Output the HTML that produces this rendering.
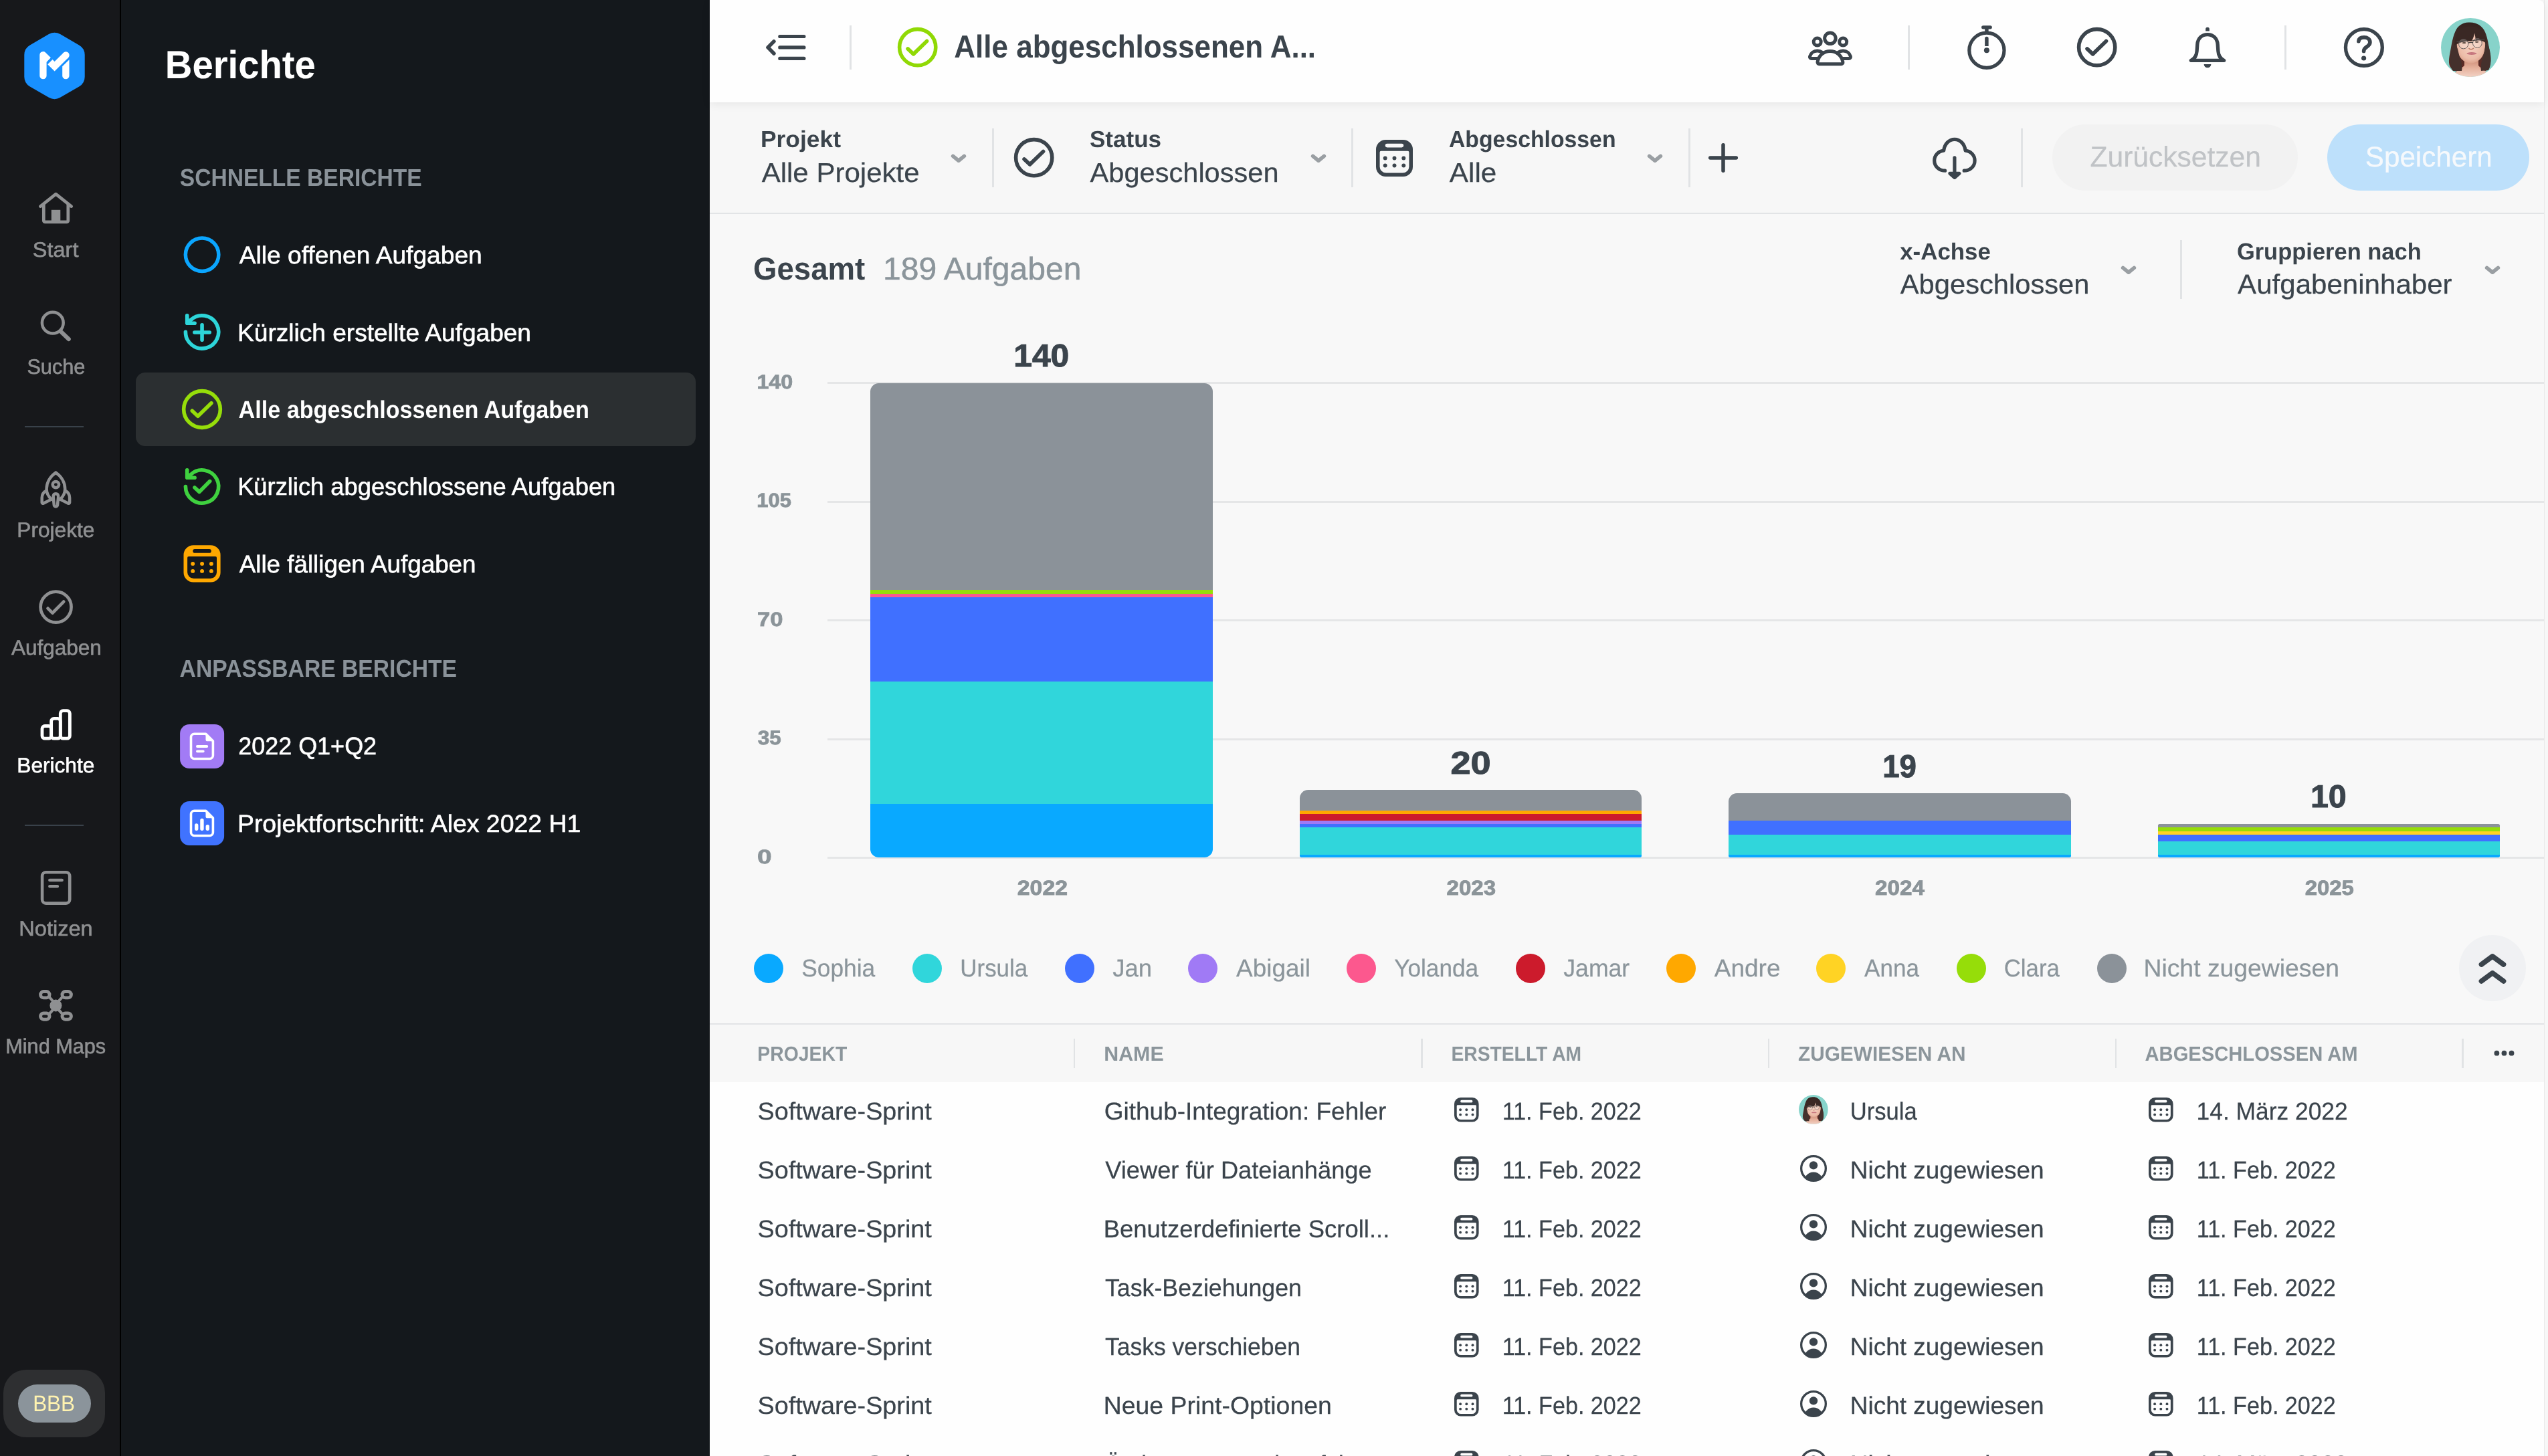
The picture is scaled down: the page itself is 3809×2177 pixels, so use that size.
<!DOCTYPE html>
<html lang="de">
<head>
<meta charset="utf-8">
<title>Berichte</title>
<style>
html,body{margin:0;padding:0}
body{width:3809px;height:2177px;overflow:hidden;position:relative;background:#f7f7f7;font-family:"Liberation Sans",sans-serif}
.t{position:absolute;white-space:nowrap;line-height:1;display:block;transform-origin:0 0;text-rendering:geometricPrecision}
#txt{position:absolute;left:0;top:0;width:3809px;height:2177px;will-change:transform}
div,svg,span{box-sizing:border-box}
</style>
</head>
<body>
<!-- navigation rail -->
<div style="position:absolute;left:0px;top:0px;width:179px;height:2177px;background:#17181b;"></div>
<div style="position:absolute;left:179px;top:0px;width:2px;height:2177px;background:#000;"></div>
<div style="position:absolute;left:181px;top:0px;width:880px;height:2177px;background:#14181c;"></div>
<!-- main area -->
<div style="position:absolute;left:1061px;top:0px;width:2742px;height:2177px;background:#f7f7f7;"></div>
<div style="position:absolute;left:3803px;top:0px;width:1px;height:2177px;background:#e9e9e9;"></div>
<div style="position:absolute;left:1061px;top:320px;width:2742px;height:1211px;background:#f8f8f8;"></div>
<div style="position:absolute;left:1061px;top:0px;width:2742px;height:152.5px;background:#fefefe;box-shadow:0 3px 14px rgba(0,0,0,0.07);border-top-right-radius:8px;"></div>
<div style="position:absolute;left:1061px;top:317.8px;width:2742px;height:2px;background:#e2e4e6;"></div>
<div style="position:absolute;left:1061px;top:1530px;width:2742px;height:2px;background:#e2e4e6;"></div>
<div style="position:absolute;left:1061px;top:1532px;width:2742px;height:86px;background:#f7f7f7;"></div>
<div style="position:absolute;left:1061px;top:1617.8px;width:2742px;height:560px;background:#fefefe;"></div>
<svg style="position:absolute;left:36px;top:48px;overflow:visible" width="92" height="101" viewBox="36 48 92 101" ><path d="M73.00,51.11 A17,17 0 0 1 90.00,51.11 L118.21,67.39 A17,17 0 0 1 126.71,82.11 L126.71,114.69 A17,17 0 0 1 118.21,129.41 L90.00,145.69 A17,17 0 0 1 73.00,145.69 L44.79,129.41 A17,17 0 0 1 36.29,114.69 L36.29,82.11 A17,17 0 0 1 44.79,67.39 Z" fill="#1890ff"/><path d="M59.3,82.2 a5.15,5.15 0 0 1 8.7,-3.7 L75.9,86.3 L69.6,92.8 L69.6,113.2 a5.15,5.15 0 0 1 -10.3,0 Z" fill="#fff"/><path d="M93.2,99.2 L103.5,89.3 L103.5,113.2 a5.15,5.15 0 0 1 -10.3,0 Z" fill="#fff"/><path d="M74.85,92.55 L81.6,99.25 L98.7,82.3" fill="none" stroke="#fff" stroke-width="10.3" stroke-linejoin="miter" stroke-linecap="butt"/><circle cx="98.5" cy="82.5" r="5.15" fill="#fff"/></svg>
<svg style="position:absolute;left:57px;top:286px;overflow:visible" width="54" height="50" viewBox="57 286 54 50" ><path d="M60.4,308.6 L83.5,290.1 L106.7,308.6" fill="none" stroke="#8f9092" stroke-width="4.7" stroke-linecap="round" stroke-linejoin="round"/><path d="M65.3,306.5 V329.8 a2,2 0 0 0 2,2 H99.8 a2,2 0 0 0 2,-2 V306.5" fill="none" stroke="#8f9092" stroke-width="4.7" stroke-linecap="round" stroke-linejoin="round"/><rect x="76.8" y="313.8" width="13.5" height="17" fill="#8f9092"/></svg>
<svg style="position:absolute;left:60px;top:463px;overflow:visible" width="48" height="49" viewBox="60 463 48 49" ><circle cx="78.8" cy="482.7" r="15.9" fill="none" stroke="#8f9092" stroke-width="4.5" stroke-linecap="round" stroke-linejoin="round"/><path d="M91,495.8 L102.7,507" fill="none" stroke="#8f9092" stroke-width="6.2" stroke-linecap="round" stroke-linejoin="round"/></svg>
<svg style="position:absolute;left:60px;top:703px;overflow:visible" width="47" height="57" viewBox="60 703 47 57" ><path d="M83.4,706.6 C74,713 69.6,722.5 69.6,731 C69.6,737.5 72.3,742.5 77,746.5 M83.4,706.6 C92.8,713 97.2,722.5 97.2,731 C97.2,737.5 94.5,742.5 89.8,746.5" fill="none" stroke="#8f9092" stroke-width="4.5" stroke-linecap="round" stroke-linejoin="round"/><circle cx="83.4" cy="724.6" r="4.7" fill="none" stroke="#8f9092" stroke-width="4.5" stroke-linecap="round" stroke-linejoin="round"/><path d="M69.4,733.5 C64.5,736 62.7,740 62.7,744.5 V751.2 a1.6,1.6 0 0 0 2.4,1.4 L77.5,746.3" fill="none" stroke="#8f9092" stroke-width="4.5" stroke-linecap="round" stroke-linejoin="round"/><path d="M97.4,733.5 C102.3,736 104.1,740 104.1,744.5 V751.2 a1.6,1.6 0 0 1 -2.4,1.4 L89.3,746.3" fill="none" stroke="#8f9092" stroke-width="4.5" stroke-linecap="round" stroke-linejoin="round"/><path d="M83.4,738.2 c3.2,0 4,2.6 3.7,5.5 l-1.1,11.2 a2.6,2.6 0 0 1 -5.2,0 l-1.1,-11.2 c-0.3,-2.9 0.5,-5.5 3.7,-5.5 Z" fill="none" stroke="#8f9092" stroke-width="4.5" stroke-linecap="round" stroke-linejoin="round"/></svg>
<svg style="position:absolute;left:55.8px;top:879.8px;overflow:visible" width="55.3" height="55.3" viewBox="55.8 879.8 55.3 55.3" ><circle cx="83.4" cy="907.4" r="22.95" fill="none" stroke="#8f9092" stroke-width="4.7" stroke-linecap="round" stroke-linejoin="round"/><path d="M71.3,909.4 L78.3,916.3 L95,899.4" fill="none" stroke="#8f9092" stroke-width="4.7" stroke-linecap="round" stroke-linejoin="round"/></svg>
<svg style="position:absolute;left:60px;top:1060px;overflow:visible" width="48" height="48" viewBox="60 1060 48 48" ><rect x="63" y="1085.5" width="13.65" height="18.7" rx="4" fill="none" stroke="#ffffff" stroke-width="4.8" stroke-linecap="round" stroke-linejoin="round"/><rect x="76.65" y="1074.3" width="13.65" height="29.9" rx="4" fill="none" stroke="#ffffff" stroke-width="4.8" stroke-linecap="round" stroke-linejoin="round"/><rect x="90.3" y="1062.7" width="14.05" height="41.5" rx="4" fill="none" stroke="#ffffff" stroke-width="4.8" stroke-linecap="round" stroke-linejoin="round"/></svg>
<svg style="position:absolute;left:60px;top:1301px;overflow:visible" width="48" height="53" viewBox="60 1301 48 53" ><rect x="63.1" y="1304.2" width="41.1" height="46.4" rx="5.5" fill="none" stroke="#8f9092" stroke-width="4.6" stroke-linecap="round" stroke-linejoin="round"/><path d="M74.4,1316 H92.6 M74.4,1325.3 H85.8" fill="none" stroke="#8f9092" stroke-width="4.6" stroke-linecap="round" stroke-linejoin="round"/></svg>
<svg style="position:absolute;left:57px;top:1479px;overflow:visible" width="53" height="49" viewBox="57 1479 53 49" ><circle cx="83.4" cy="1503.4" r="9" fill="#8f9092"/><rect x="60.55" y="1482.55" width="13.5" height="9.3" rx="4.65" fill="none" stroke="#8f9092" stroke-width="4.9" stroke-linecap="round" stroke-linejoin="round"/><rect x="92.95" y="1482.55" width="13.5" height="9.3" rx="4.65" fill="none" stroke="#8f9092" stroke-width="4.9" stroke-linecap="round" stroke-linejoin="round"/><rect x="60.55" y="1514.95" width="13.5" height="9.3" rx="4.65" fill="none" stroke="#8f9092" stroke-width="4.9" stroke-linecap="round" stroke-linejoin="round"/><rect x="92.95" y="1514.95" width="13.5" height="9.3" rx="4.65" fill="none" stroke="#8f9092" stroke-width="4.9" stroke-linecap="round" stroke-linejoin="round"/><path d="M74.5,1491.8 Q78,1495 80.5,1499.5 M92.3,1491.8 Q88.8,1495 86.3,1499.5 M74.5,1515 Q78,1511.8 80.5,1507.3 M92.3,1515 Q88.8,1511.8 86.3,1507.3" fill="none" stroke="#8f9092" stroke-width="4.2" stroke-linecap="round" stroke-linejoin="round"/></svg>
<div style="position:absolute;left:37px;top:636.7px;width:88px;height:2px;background:#39414a;"></div>
<div style="position:absolute;left:37px;top:1232.7px;width:88px;height:2px;background:#39414a;"></div>
<div style="position:absolute;left:5px;top:2048px;width:152px;height:101px;background:#2e2f31;border-radius:34px;"></div>
<div style="position:absolute;left:27px;top:2070px;width:108.5px;height:57px;background:#8b949b;border-radius:28.5px;"></div>
<div style="position:absolute;left:203px;top:557px;width:837px;height:110px;background:#2b2f31;border-radius:14px;"></div>
<svg style="position:absolute;left:274px;top:353px;overflow:visible" width="56" height="56" viewBox="274 353 56 56" ><circle cx="302.1" cy="380.8" r="24.75" fill="none" stroke="#0ba6ff" stroke-width="5.5" stroke-linecap="round" stroke-linejoin="round"/></svg>
<svg style="position:absolute;left:274px;top:468px;overflow:visible" width="56" height="57" viewBox="274 468 56 57" ><path d="M285.24,478.37 A24.65,24.65 0 1 1 277.40,496.40" fill="none" stroke="#2dd5d9" stroke-width="5.6" stroke-linecap="round" stroke-linejoin="round"/><path d="M279.70,471.80 V483.20 H291.10" fill="none" stroke="#2dd5d9" stroke-width="5.6" stroke-linecap="round" stroke-linejoin="round"/><path d="M279.70,473.70 L279.70,483.20 L289.20,483.20 Z" fill="#2dd5d9"/><path d="M290.85,497.00 H313.25 M302.05,485.80 V508.20" fill="none" stroke="#2dd5d9" stroke-width="5.6" stroke-linecap="round" stroke-linejoin="round"/></svg>
<svg style="position:absolute;left:268.9px;top:579.0px;overflow:visible" width="65.9" height="65.9" viewBox="268.9 579.0 65.9 65.9" ><circle cx="301.9" cy="612" r="27.35" fill="none" stroke="#96de0a" stroke-width="5.6" stroke-linecap="round" stroke-linejoin="round"/><path d="M287.2,614.2 L295.7,622.2 L315.8,602.8" fill="none" stroke="#96de0a" stroke-width="5.6" stroke-linecap="round" stroke-linejoin="round"/></svg>
<svg style="position:absolute;left:274px;top:699px;overflow:visible" width="56" height="57" viewBox="274 699 56 57" ><path d="M285.24,709.47 A24.65,24.65 0 1 1 277.40,727.50" fill="none" stroke="#3fd13f" stroke-width="5.6" stroke-linecap="round" stroke-linejoin="round"/><path d="M279.70,702.90 V714.30 H291.10" fill="none" stroke="#3fd13f" stroke-width="5.6" stroke-linecap="round" stroke-linejoin="round"/><path d="M279.70,704.80 L279.70,714.30 L289.20,714.30 Z" fill="#3fd13f"/><path d="M291,729 L297.9,735.4 L313.7,719.6" fill="none" stroke="#3fd13f" stroke-width="5.6" stroke-linecap="round" stroke-linejoin="round"/></svg>
<svg style="position:absolute;left:274px;top:814px;overflow:visible" width="56" height="57" viewBox="274 814 56 57" ><path d="M289.00,815.30 H315.10 A14.50,14.50 0 0 1 329.60,829.80 V855.90 A14.50,14.50 0 0 1 315.10,870.40 H289.00 A14.50,14.50 0 0 1 274.50,855.90 V829.80 A14.50,14.50 0 0 1 289.00,815.30 Z M291.10,821.10 H313.00 A2.80,2.80 0 0 1 313.00,826.70 H291.10 A2.80,2.80 0 0 1 291.10,821.10 Z M282.10,832.10 H322.00 A2.00,2.00 0 0 1 324.00,834.10 V855.50 A9.50,9.50 0 0 1 314.50,865.00 H289.60 A9.50,9.50 0 0 1 280.10,855.50 V834.10 A2.00,2.00 0 0 1 282.10,832.10 Z" fill="#ffa800" fill-rule="evenodd"/><circle cx="288.20" cy="842.90" r="2.95" fill="#ffa800"/><circle cx="288.20" cy="853.90" r="2.95" fill="#ffa800"/><circle cx="302.05" cy="842.90" r="2.95" fill="#ffa800"/><circle cx="302.05" cy="853.90" r="2.95" fill="#ffa800"/><circle cx="315.90" cy="842.90" r="2.95" fill="#ffa800"/><circle cx="315.90" cy="853.90" r="2.95" fill="#ffa800"/></svg>
<svg style="position:absolute;left:269px;top:1082px;overflow:visible" width="67" height="68" viewBox="269 1082 67 68" ><rect x="269.1" y="1082.9" width="66" height="66.2" rx="14" fill="#a27bf5"/><path d="M290.50,1097.30 H307.70 L318.40,1108.10 V1129.50 A5,5 0 0 1 313.40,1134.50 H290.50 A5,5 0 0 1 285.50,1129.50 V1102.30 A5,5 0 0 1 290.50,1097.30 Z" fill="none" stroke="#fff" stroke-width="3.6" stroke-linecap="round" stroke-linejoin="round"/><path d="M307.50,1097.10 L318.60,1108.30 H310.10 A2.6,2.6 0 0 1 307.50,1105.70 Z" fill="#fff"/><path d="M294.90,1116.00 H309.30 M294.90,1123.30 H303.80" fill="none" stroke="#fff" stroke-width="3.8" stroke-linecap="round" stroke-linejoin="round"/></svg>
<svg style="position:absolute;left:269px;top:1197px;overflow:visible" width="67" height="68" viewBox="269 1197 67 68" ><rect x="269.1" y="1197.9" width="66" height="66.2" rx="14" fill="#4073ff"/><path d="M290.50,1212.30 H307.70 L318.40,1223.10 V1244.50 A5,5 0 0 1 313.40,1249.50 H290.50 A5,5 0 0 1 285.50,1244.50 V1217.30 A5,5 0 0 1 290.50,1212.30 Z" fill="none" stroke="#fff" stroke-width="3.6" stroke-linecap="round" stroke-linejoin="round"/><path d="M307.50,1212.10 L318.60,1223.30 H310.10 A2.6,2.6 0 0 1 307.50,1220.70 Z" fill="#fff"/><path d="M293.70,1233.90 V1239.20 M301.95,1226.50 V1239.20 M310.30,1235.60 V1239.20" fill="none" stroke="#fff" stroke-width="5.4" stroke-linecap="round" stroke-linejoin="round"/></svg>
<svg style="position:absolute;left:1144px;top:51px;overflow:visible" width="62" height="40" viewBox="1144 51 62 40" ><path d="M1165.8,54.5 H1201.9 M1165.8,70.9 H1201.9 M1165.8,87.4 H1201.9" fill="none" stroke="#3b444c" stroke-width="5.2" stroke-linecap="round" stroke-linejoin="round"/><path d="M1156.9,61.9 L1148,70.9 L1156.9,80" fill="none" stroke="#3b444c" stroke-width="5.6" stroke-linecap="round" stroke-linejoin="round"/></svg>
<div style="position:absolute;left:1270px;top:38px;width:3px;height:65.5px;background:#e1e3e5;"></div>
<svg style="position:absolute;left:1339.3px;top:38.3px;overflow:visible" width="65.4" height="65.4" viewBox="1339.3 38.3 65.4 65.4" ><circle cx="1372" cy="71" r="27.1" fill="none" stroke="#90d905" stroke-width="5.6" stroke-linecap="round" stroke-linejoin="round"/><path d="M1357.35,73.19 L1365.82,81.17 L1385.85,61.83" fill="none" stroke="#90d905" stroke-width="5.6" stroke-linecap="round" stroke-linejoin="round"/></svg>
<svg style="position:absolute;left:2702px;top:46px;overflow:visible" width="68" height="54" viewBox="2702 46 68 54" ><circle cx="2735.9" cy="57.3" r="8.25" fill="none" stroke="#3b444c" stroke-width="5" stroke-linecap="round" stroke-linejoin="round"/><circle cx="2716.7" cy="62.6" r="5.5" fill="none" stroke="#3b444c" stroke-width="5" stroke-linecap="round" stroke-linejoin="round"/><circle cx="2755.2" cy="62.6" r="5.5" fill="none" stroke="#3b444c" stroke-width="5" stroke-linecap="round" stroke-linejoin="round"/><path d="M2719.6,95.8 H2752.3 a2.6,2.6 0 0 0 2.6,-3 C2753.2,83 2745.5,76.5 2735.9,76.5 C2726.3,76.5 2718.7,83 2717,92.8 a2.6,2.6 0 0 0 2.6,3 Z" fill="none" stroke="#3b444c" stroke-width="5" stroke-linecap="round" stroke-linejoin="round"/><path d="M2717,87.6 H2708 a2.6,2.6 0 0 1 -2.5,-3.3 C2707,79 2711.5,76 2716.7,76 C2719.5,76 2722,76.8 2724,78.2" fill="none" stroke="#3b444c" stroke-width="5" stroke-linecap="round" stroke-linejoin="round"/><path d="M2754.9,87.6 H2763.9 a2.6,2.6 0 0 0 2.5,-3.3 C2764.9,79 2760.4,76 2755.2,76 C2752.4,76 2749.9,76.8 2747.9,78.2" fill="none" stroke="#3b444c" stroke-width="5" stroke-linecap="round" stroke-linejoin="round"/></svg>
<div style="position:absolute;left:2851.6px;top:38px;width:3px;height:65.5px;background:#e1e3e5;"></div>
<svg style="position:absolute;left:2940px;top:37px;overflow:visible" width="60" height="68" viewBox="2940 37 60 68" ><circle cx="2969.9" cy="75.2" r="26.1" fill="none" stroke="#3b444c" stroke-width="5.2" stroke-linecap="round" stroke-linejoin="round"/><path d="M2964.7,40.8 H2975.2" fill="none" stroke="#3b444c" stroke-width="5.3" stroke-linecap="round" stroke-linejoin="round"/><path d="M2969.9,41 V49.5" fill="none" stroke="#3b444c" stroke-width="5.5" stroke-linecap="butt" stroke-linejoin="round"/><path d="M2967.15,68.9 V57.4 a2.75,2.75 0 0 1 5.5,0 V68.9 Z" fill="#3b444c"/><circle cx="2969.9" cy="75.2" r="4" fill="#3b444c"/></svg>
<svg style="position:absolute;left:3102.3px;top:38.3px;overflow:visible" width="65.4" height="65.4" viewBox="3102.3 38.3 65.4 65.4" ><circle cx="3135" cy="71" r="27.1" fill="none" stroke="#3b444c" stroke-width="5.6" stroke-linecap="round" stroke-linejoin="round"/><path d="M3120.35,73.19 L3128.82,81.17 L3148.85,61.83" fill="none" stroke="#3b444c" stroke-width="5.6" stroke-linecap="round" stroke-linejoin="round"/></svg>
<svg style="position:absolute;left:3271px;top:40px;overflow:visible" width="58" height="62" viewBox="3271 40 58 62" ><path d="M3297.15,46.4 V43.7 a2.85,2.85 0 0 1 5.7,0 V46.4 Z" fill="#3b444c"/><path d="M3275.3,90.3 H3324.7 C3318.5,87.5 3316.3,82.5 3315.9,76.5 L3315.2,66.5 C3314.6,57.5 3308.5,51.6 3300,51.6 C3291.5,51.6 3285.4,57.5 3284.8,66.5 L3284.1,76.5 C3283.7,82.5 3281.5,87.5 3275.3,90.3 Z" fill="none" stroke="#3b444c" stroke-width="5.3" stroke-linecap="round" stroke-linejoin="round"/><path d="M3294.6,95.9 H3305.4 a5.4,5.4 0 0 1 -10.8,0 Z" fill="#3b444c"/></svg>
<div style="position:absolute;left:3415px;top:38px;width:3px;height:65.5px;background:#e1e3e5;"></div>
<svg style="position:absolute;left:3503px;top:40px;overflow:visible" width="62" height="62" viewBox="3503 40 62 62" ><circle cx="3533.9" cy="71" r="27.45" fill="none" stroke="#3b444c" stroke-width="5.3" stroke-linecap="round" stroke-linejoin="round"/><path d="M3525.9,61.7 C3526.3,57.8 3529.6,55.9 3534,55.9 C3538.8,55.9 3542.9,58.5 3542.9,63.2 C3542.9,69.8 3533.6,70 3533.6,76.4" fill="none" stroke="#3b444c" stroke-width="5.7" stroke-linecap="round" stroke-linejoin="round"/><circle cx="3533.6" cy="87" r="3.6" fill="#3b444c"/></svg>
<svg style="position:absolute;left:3648.3px;top:26px;overflow:visible" width="90" height="90" viewBox="3648.3 26 90 90" ><defs><clipPath id="avc1"><circle cx="3693.3" cy="71" r="44"/></clipPath><radialGradient id="avf1" cx="0.5" cy="0.45" r="0.6"><stop offset="0" stop-color="#f6d3c4"/><stop offset="0.7" stop-color="#ecbca8"/><stop offset="1" stop-color="#d79a84"/></radialGradient><linearGradient id="avh1" x1="0" y1="0" x2="0" y2="1"><stop offset="0" stop-color="#34231f"/><stop offset="0.55" stop-color="#4a332f"/><stop offset="0.85" stop-color="#5a2a25"/><stop offset="1" stop-color="#7a2b24"/></linearGradient><linearGradient id="avn1" x1="0" y1="0" x2="0" y2="1"><stop offset="0" stop-color="#c98670"/><stop offset="0.5" stop-color="#e6b29d"/><stop offset="1" stop-color="#f4d6ca"/></linearGradient></defs><g clip-path="url(#avc1)"><rect x="3649.3" y="27" width="88" height="88" fill="#87d3ca"/><path d="M 3690.30 33.50 C 3701.30 32.50 3711.30 38.00 3715.30 48.00 C 3719.30 57.00 3720.80 69.00 3722.30 79.00 C 3724.30 89.00 3724.30 97.00 3719.30 104.00 C 3715.30 107.00 3709.30 107.50 3705.30 106.00 L 3679.30 106.00 C 3673.30 108.00 3667.30 106.00 3663.80 101.00 C 3659.80 95.00 3661.30 87.00 3662.80 79.00 C 3664.80 69.00 3666.30 57.00 3670.30 48.00 C 3674.30 38.00 3681.30 34.00 3690.30 33.50 Z" fill="url(#avh1)"/><path d="M 3684.30 87.00 L 3684.30 98.00 C 3679.30 103.00 3670.30 106.00 3663.30 117.00 L 3725.30 117.00 C 3718.30 106.00 3709.30 103.00 3705.30 98.00 L 3705.30 87.00 Z" fill="url(#avn1)"/><path d="M 3673.10 63.00 C 3672.80 73.00 3674.30 82.00 3680.30 88.50 C 3684.30 92.50 3689.30 94.50 3694.30 94.50 C 3699.30 94.50 3704.80 92.00 3708.80 87.50 C 3713.80 82.00 3715.80 73.00 3715.30 63.00 C 3715.30 55.00 3707.30 48.00 3694.30 48.00 C 3681.30 48.00 3673.30 55.00 3673.10 63.00 Z" fill="url(#avf1)"/><path d="M 3669.30 65.00 C 3673.30 67.00 3674.80 75.00 3676.30 82.00 C 3678.30 90.00 3682.30 96.00 3680.30 106.00 L 3667.30 106.00 C 3660.30 97.00 3662.30 79.00 3669.30 65.00 Z" fill="#44302c"/><path d="M 3718.30 63.00 C 3715.30 67.00 3714.80 75.00 3713.30 82.00 C 3711.30 90.00 3707.30 96.00 3709.30 106.00 L 3720.30 105.00 C 3726.30 95.00 3724.30 77.00 3718.30 63.00 Z" fill="#44302c"/><path d="M 3669.30 68.00 C 3670.30 54.00 3675.30 42.00 3690.30 39.50 C 3705.30 37.50 3716.30 49.00 3718.30 66.00 C 3715.30 63.00 3711.30 61.00 3707.30 60.50 C 3704.30 60.00 3702.30 60.30 3701.30 61.00 C 3700.90 57.00 3700.30 53.00 3699.60 49.50 C 3698.60 54.00 3697.10 58.00 3695.30 61.50 C 3687.30 61.00 3677.30 63.00 3669.30 68.00 Z" fill="#3a2824"/><circle cx="3683.00" cy="65.80" r="7.10" fill="rgba(255,255,255,0.22)" stroke="#6a615f" stroke-width="1.00"/><circle cx="3703.70" cy="64.40" r="6.90" fill="rgba(255,255,255,0.22)" stroke="#6a615f" stroke-width="1.00"/><path d="M 3673.30 62.20 L 3689.80 61.20 M 3696.80 60.60 L 3714.30 58.60 M 3689.90 64.20 Q 3693.30 62.80 3696.80 63.60" stroke="#4a4443" stroke-width="1.30" fill="none" stroke-linecap="round"/><ellipse cx="3683.90" cy="64.20" rx="2.90" ry="1.10" fill="#5c4a42"/><ellipse cx="3702.90" cy="62.80" rx="2.90" ry="1.10" fill="#5c4a42"/><path d="M 3691.30 72.60 Q 3694.30 75.00 3697.70 72.40" stroke="#bd7c66" stroke-width="1.60" fill="none" stroke-linecap="round"/><ellipse cx="3695.20" cy="80.00" rx="7.40" ry="1.90" fill="#c7787f"/></g></svg>
<svg style="position:absolute;left:1421.1px;top:230px;overflow:visible" width="24" height="14" viewBox="1421.1 230 24 14" ><path d="M1424.70,233.40 L1433.10,240.20 L1441.50,233.40" fill="none" stroke="#9a9fa3" stroke-width="5.6" stroke-linecap="round" stroke-linejoin="round"/></svg>
<div style="position:absolute;left:1483.2px;top:192px;width:3px;height:87.5px;background:#e1e3e5;"></div>
<svg style="position:absolute;left:1513.3px;top:203.3px;overflow:visible" width="65.4" height="65.4" viewBox="1513.3 203.3 65.4 65.4" ><circle cx="1546" cy="236" r="27.1" fill="none" stroke="#3b444c" stroke-width="5.6" stroke-linecap="round" stroke-linejoin="round"/><path d="M1531.35,238.19 L1539.82,246.17 L1559.85,226.83" fill="none" stroke="#3b444c" stroke-width="5.6" stroke-linecap="round" stroke-linejoin="round"/></svg>
<svg style="position:absolute;left:1959.2px;top:230px;overflow:visible" width="24" height="14" viewBox="1959.2 230 24 14" ><path d="M1962.80,233.40 L1971.20,240.20 L1979.60,233.40" fill="none" stroke="#9a9fa3" stroke-width="5.6" stroke-linecap="round" stroke-linejoin="round"/></svg>
<div style="position:absolute;left:2020.2px;top:192px;width:3px;height:87.5px;background:#e1e3e5;"></div>
<svg style="position:absolute;left:2055.5px;top:207.5px;overflow:visible" width="57" height="57" viewBox="2055.5 207.5 57 57" ><path d="M2070.97,208.50 H2097.03 A14.47,14.47 0 0 1 2111.50,222.97 V249.03 A14.47,14.47 0 0 1 2097.03,263.50 H2070.97 A14.47,14.47 0 0 1 2056.50,249.03 V222.97 A14.47,14.47 0 0 1 2070.97,208.50 Z M2073.07,214.29 H2094.93 A2.79,2.79 0 0 1 2094.93,219.88 H2073.07 A2.79,2.79 0 0 1 2073.07,214.29 Z M2064.09,225.27 H2103.91 A2.00,2.00 0 0 1 2105.91,227.27 V248.63 A9.48,9.48 0 0 1 2096.43,258.11 H2071.57 A9.48,9.48 0 0 1 2062.09,248.63 V227.27 A2.00,2.00 0 0 1 2064.09,225.27 Z" fill="#3b444c" fill-rule="evenodd"/><circle cx="2070.18" cy="236.05" r="2.94" fill="#3b444c"/><circle cx="2070.18" cy="247.03" r="2.94" fill="#3b444c"/><circle cx="2084.00" cy="236.05" r="2.94" fill="#3b444c"/><circle cx="2084.00" cy="247.03" r="2.94" fill="#3b444c"/><circle cx="2097.82" cy="236.05" r="2.94" fill="#3b444c"/><circle cx="2097.82" cy="247.03" r="2.94" fill="#3b444c"/></svg>
<svg style="position:absolute;left:2462.1px;top:230px;overflow:visible" width="24" height="14" viewBox="2462.1 230 24 14" ><path d="M2465.70,233.40 L2474.10,240.20 L2482.50,233.40" fill="none" stroke="#9a9fa3" stroke-width="5.6" stroke-linecap="round" stroke-linejoin="round"/></svg>
<div style="position:absolute;left:2523.8px;top:192px;width:3px;height:87.5px;background:#e1e3e5;"></div>
<svg style="position:absolute;left:2553px;top:213px;overflow:visible" width="46" height="46" viewBox="2553 213 46 46" ><path d="M2556.7,236 H2595.3 M2576,216.7 V255.3" fill="none" stroke="#3b444c" stroke-width="5.5" stroke-linecap="round" stroke-linejoin="round"/></svg>
<svg style="position:absolute;left:2888px;top:205px;overflow:visible" width="68" height="64" viewBox="2888 205 68 64" ><path d="M2907.6,255.2 C2898.6,255.2 2891.7,248.6 2891.7,240.2 C2891.7,232.2 2897.6,226 2905.7,225.1 C2906.8,215.6 2913.4,208.3 2921.9,208.3 C2930.4,208.3 2937,215.6 2938.1,225.1 C2946.2,226 2952.1,232.2 2952.1,240.2 C2952.1,248.6 2945.2,255.2 2936.2,255.2" fill="none" stroke="#3b444c" stroke-width="5.2" stroke-linecap="round" stroke-linejoin="round"/><path d="M2921.9,235.8 V262" fill="none" stroke="#3b444c" stroke-width="5.2" stroke-linecap="round" stroke-linejoin="round"/><path d="M2914.8,259.3 L2921.9,265.5 L2929,259.3 Z" fill="#3b444c" stroke="#3b444c" stroke-width="5" stroke-linecap="round" stroke-linejoin="round"/></svg>
<div style="position:absolute;left:3021px;top:192px;width:3px;height:87.5px;background:#e1e3e5;"></div>
<div style="position:absolute;left:3068px;top:186px;width:367px;height:99px;background:#f2f2f2;border-radius:49.5px;"></div>
<div style="position:absolute;left:3479px;top:186px;width:302.2px;height:99px;background:#bde0fb;border-radius:49.5px;"></div>
<svg style="position:absolute;left:3169.9px;top:396.6px;overflow:visible" width="24" height="14" viewBox="3169.9 396.6 24 14" ><path d="M3173.50,400.00 L3181.90,406.80 L3190.30,400.00" fill="none" stroke="#9a9fa3" stroke-width="5.6" stroke-linecap="round" stroke-linejoin="round"/></svg>
<div style="position:absolute;left:3259px;top:359px;width:3px;height:88px;background:#e1e3e5;"></div>
<svg style="position:absolute;left:3714px;top:396.6px;overflow:visible" width="24" height="14" viewBox="3714 396.6 24 14" ><path d="M3717.60,400.00 L3726.00,406.80 L3734.40,400.00" fill="none" stroke="#9a9fa3" stroke-width="5.6" stroke-linecap="round" stroke-linejoin="round"/></svg>
<div style="position:absolute;left:1237px;top:571.0px;width:2566px;height:3px;background:#e5e6e7;"></div>
<div style="position:absolute;left:1237px;top:748.5px;width:2566px;height:3px;background:#e5e6e7;"></div>
<div style="position:absolute;left:1237px;top:926.0px;width:2566px;height:3px;background:#e5e6e7;"></div>
<div style="position:absolute;left:1237px;top:1103.5px;width:2566px;height:3px;background:#e5e6e7;"></div>
<div style="position:absolute;left:1237px;top:1281.0px;width:2566px;height:3px;background:#e5e6e7;"></div>
<div style="position:absolute;left:1301.2px;top:572.50px;width:511.5px;height:710.00px"><div style="position:absolute;left:0;top:628.86px;width:511.5px;height:81.14px;background:#09a9ff;border-radius:0 0 12.5px 12.5px;"></div><div style="position:absolute;left:0;top:446.29px;width:511.5px;height:183.17px;background:#30d6db;"></div><div style="position:absolute;left:0;top:319.50px;width:511.5px;height:127.39px;background:#4070ff;"></div><div style="position:absolute;left:0;top:314.43px;width:511.5px;height:5.67px;background:#fc588e;"></div><div style="position:absolute;left:0;top:309.36px;width:511.5px;height:5.67px;background:#96dd09;"></div><div style="position:absolute;left:0;top:0.00px;width:511.5px;height:309.96px;background:#8b9299;border-radius:12.5px 12.5px 0 0;"></div></div>
<div style="position:absolute;left:1942.7px;top:1181.07px;width:511.5px;height:101.43px"><div style="position:absolute;left:0;top:96.36px;width:511.5px;height:5.07px;background:#09a9ff;border-radius:0 0 2.5px 2.5px;"></div><div style="position:absolute;left:0;top:55.79px;width:511.5px;height:41.17px;background:#30d6db;"></div><div style="position:absolute;left:0;top:50.71px;width:511.5px;height:5.67px;background:#4070ff;"></div><div style="position:absolute;left:0;top:45.64px;width:511.5px;height:5.67px;background:#a07af5;"></div><div style="position:absolute;left:0;top:35.50px;width:511.5px;height:10.74px;background:#cc1b2c;"></div><div style="position:absolute;left:0;top:30.43px;width:511.5px;height:5.67px;background:#ffa800;"></div><div style="position:absolute;left:0;top:0.00px;width:511.5px;height:31.03px;background:#8b9299;border-radius:12.5px 12.5px 0 0;"></div></div>
<div style="position:absolute;left:2584.2px;top:1186.14px;width:511.5px;height:96.36px"><div style="position:absolute;left:0;top:91.29px;width:511.5px;height:5.07px;background:#09a9ff;border-radius:0 0 2.5px 2.5px;"></div><div style="position:absolute;left:0;top:60.86px;width:511.5px;height:31.03px;background:#30d6db;"></div><div style="position:absolute;left:0;top:40.57px;width:511.5px;height:20.89px;background:#4070ff;"></div><div style="position:absolute;left:0;top:0.00px;width:511.5px;height:41.17px;background:#8b9299;border-radius:12.5px 12.5px 0 0;"></div></div>
<div style="position:absolute;left:3225.8px;top:1231.79px;width:511.5px;height:50.71px"><div style="position:absolute;left:0;top:45.64px;width:511.5px;height:5.07px;background:#09a9ff;border-radius:0 0 2.5px 2.5px;"></div><div style="position:absolute;left:0;top:25.36px;width:511.5px;height:20.89px;background:#30d6db;"></div><div style="position:absolute;left:0;top:15.21px;width:511.5px;height:10.74px;background:#4070ff;"></div><div style="position:absolute;left:0;top:10.14px;width:511.5px;height:5.67px;background:#ffd324;"></div><div style="position:absolute;left:0;top:5.07px;width:511.5px;height:5.67px;background:#96dd09;"></div><div style="position:absolute;left:0;top:0.00px;width:511.5px;height:5.67px;background:#8b9299;border-radius:2.5px 2.5px 0 0;"></div></div>
<div style="position:absolute;left:1127.2px;top:1425.9px;width:43.8px;height:43.8px;background:#09a9ff;border-radius:22px;"></div>
<div style="position:absolute;left:1364.2px;top:1425.9px;width:43.8px;height:43.8px;background:#30d6db;border-radius:22px;"></div>
<div style="position:absolute;left:1592px;top:1425.9px;width:43.8px;height:43.8px;background:#4070ff;border-radius:22px;"></div>
<div style="position:absolute;left:1776px;top:1425.9px;width:43.8px;height:43.8px;background:#a07af5;border-radius:22px;"></div>
<div style="position:absolute;left:2013.2px;top:1425.9px;width:43.8px;height:43.8px;background:#fc588e;border-radius:22px;"></div>
<div style="position:absolute;left:2266.1px;top:1425.9px;width:43.8px;height:43.8px;background:#cc1b2c;border-radius:22px;"></div>
<div style="position:absolute;left:2491.1px;top:1425.9px;width:43.8px;height:43.8px;background:#ffa800;border-radius:22px;"></div>
<div style="position:absolute;left:2715.1px;top:1425.9px;width:43.8px;height:43.8px;background:#ffd324;border-radius:22px;"></div>
<div style="position:absolute;left:2924.8px;top:1425.9px;width:43.8px;height:43.8px;background:#96dd09;border-radius:22px;"></div>
<div style="position:absolute;left:3135.1px;top:1425.9px;width:43.8px;height:43.8px;background:#8b9299;border-radius:22px;"></div>
<div style="position:absolute;left:3676px;top:1397.5px;width:99.5px;height:99.5px;background:#f0f1f3;border-radius:50px;"></div>
<svg style="position:absolute;left:3705px;top:1425px;overflow:visible" width="43" height="47" viewBox="3705 1425 43 47" ><path d="M3709.4,1442.1 L3726,1429.9 L3742.6,1442.1 M3709.4,1467 L3726,1454.8 L3742.6,1467" fill="none" stroke="#3b444c" stroke-width="7.6" stroke-linecap="round" stroke-linejoin="round"/></svg>
<div style="position:absolute;left:1605px;top:1553px;width:2.3px;height:44px;background:#e1e3e5;"></div>
<div style="position:absolute;left:2124.3px;top:1553px;width:2.3px;height:44px;background:#e1e3e5;"></div>
<div style="position:absolute;left:2643.2px;top:1553px;width:2.3px;height:44px;background:#e1e3e5;"></div>
<div style="position:absolute;left:3161.8px;top:1553px;width:2.3px;height:44px;background:#e1e3e5;"></div>
<div style="position:absolute;left:3680.4px;top:1553px;width:2.3px;height:44px;background:#e1e3e5;"></div>
<svg style="position:absolute;left:3728px;top:1570px;overflow:visible" width="31" height="10" viewBox="3728 1570 31 10" ><circle cx="3732.4" cy="1574.7" r="3.9" fill="#3b444c"/><circle cx="3743.45" cy="1574.7" r="3.9" fill="#3b444c"/><circle cx="3754.5" cy="1574.7" r="3.9" fill="#3b444c"/></svg>
<svg style="position:absolute;left:2172.7px;top:1639.5px;overflow:visible" width="38.6" height="38.6" viewBox="2172.7 1639.5 38.6 38.6" ><path d="M2183.33,1640.50 H2200.67 A9.63,9.63 0 0 1 2210.30,1650.13 V1667.47 A9.63,9.63 0 0 1 2200.67,1677.10 H2183.33 A9.63,9.63 0 0 1 2173.70,1667.47 V1650.13 A9.63,9.63 0 0 1 2183.33,1640.50 Z M2184.73,1644.35 H2199.27 A1.86,1.86 0 0 1 2199.27,1648.07 H2184.73 A1.86,1.86 0 0 1 2184.73,1644.35 Z M2178.75,1651.66 H2205.25 A1.33,1.33 0 0 1 2206.58,1652.99 V1667.20 A6.31,6.31 0 0 1 2200.27,1673.51 H2183.73 A6.31,6.31 0 0 1 2177.42,1667.20 V1652.99 A1.33,1.33 0 0 1 2178.75,1651.66 Z" fill="#3b444c" fill-rule="evenodd"/><circle cx="2182.80" cy="1658.83" r="1.96" fill="#3b444c"/><circle cx="2182.80" cy="1666.14" r="1.96" fill="#3b444c"/><circle cx="2192.00" cy="1658.83" r="1.96" fill="#3b444c"/><circle cx="2192.00" cy="1666.14" r="1.96" fill="#3b444c"/><circle cx="2201.20" cy="1658.83" r="1.96" fill="#3b444c"/><circle cx="2201.20" cy="1666.14" r="1.96" fill="#3b444c"/></svg>
<svg style="position:absolute;left:2688.2px;top:1636.1px;overflow:visible" width="45.8" height="45.8" viewBox="2688.2 1636.1 45.8 45.8" ><defs><clipPath id="avc2"><circle cx="2711.1" cy="1659.0" r="21.9"/></clipPath><radialGradient id="avf2" cx="0.5" cy="0.45" r="0.6"><stop offset="0" stop-color="#f6d3c4"/><stop offset="0.7" stop-color="#ecbca8"/><stop offset="1" stop-color="#d79a84"/></radialGradient><linearGradient id="avh2" x1="0" y1="0" x2="0" y2="1"><stop offset="0" stop-color="#34231f"/><stop offset="0.55" stop-color="#4a332f"/><stop offset="0.85" stop-color="#5a2a25"/><stop offset="1" stop-color="#7a2b24"/></linearGradient><linearGradient id="avn2" x1="0" y1="0" x2="0" y2="1"><stop offset="0" stop-color="#c98670"/><stop offset="0.5" stop-color="#e6b29d"/><stop offset="1" stop-color="#f4d6ca"/></linearGradient></defs><g clip-path="url(#avc2)"><rect x="2689.2" y="1637.1" width="43.8" height="43.8" fill="#87d3ca"/><path d="M 2709.61 1640.34 C 2715.08 1639.84 2720.06 1642.57 2722.05 1647.55 C 2724.04 1652.03 2724.79 1658.00 2725.53 1662.98 C 2726.53 1667.96 2726.53 1671.94 2724.04 1675.42 C 2722.05 1676.92 2719.06 1677.17 2717.07 1676.42 L 2704.13 1676.42 C 2701.15 1677.42 2698.16 1676.42 2696.42 1673.93 C 2694.43 1670.95 2695.17 1666.96 2695.92 1662.98 C 2696.91 1658.00 2697.66 1652.03 2699.65 1647.55 C 2701.64 1642.57 2705.13 1640.58 2709.61 1640.34 Z" fill="url(#avh2)"/><path d="M 2706.62 1666.96 L 2706.62 1672.44 C 2704.13 1674.93 2699.65 1676.42 2696.17 1681.90 L 2727.03 1681.90 C 2723.54 1676.42 2719.06 1674.93 2717.07 1672.44 L 2717.07 1666.96 Z" fill="url(#avn2)"/><path d="M 2701.05 1655.02 C 2700.90 1660.00 2701.64 1664.47 2704.63 1667.71 C 2706.62 1669.70 2709.11 1670.70 2711.60 1670.70 C 2714.09 1670.70 2716.82 1669.45 2718.81 1667.21 C 2721.30 1664.47 2722.30 1660.00 2722.05 1655.02 C 2722.05 1651.04 2718.07 1647.55 2711.60 1647.55 C 2705.13 1647.55 2701.15 1651.04 2701.05 1655.02 Z" fill="url(#avf2)"/><path d="M 2699.15 1656.01 C 2701.15 1657.01 2701.89 1660.99 2702.64 1664.47 C 2703.63 1668.46 2705.62 1671.44 2704.63 1676.42 L 2698.16 1676.42 C 2694.67 1671.94 2695.67 1662.98 2699.15 1656.01 Z" fill="#44302c"/><path d="M 2723.54 1655.02 C 2722.05 1657.01 2721.80 1660.99 2721.05 1664.47 C 2720.06 1668.46 2718.07 1671.44 2719.06 1676.42 L 2724.54 1675.92 C 2727.52 1670.95 2726.53 1661.99 2723.54 1655.02 Z" fill="#44302c"/><path d="M 2699.15 1657.51 C 2699.65 1650.54 2702.14 1644.57 2709.61 1643.32 C 2717.07 1642.33 2722.55 1648.05 2723.54 1656.51 C 2722.05 1655.02 2720.06 1654.02 2718.07 1653.77 C 2716.57 1653.52 2715.58 1653.67 2715.08 1654.02 C 2714.88 1652.03 2714.58 1650.04 2714.24 1648.30 C 2713.74 1650.54 2712.99 1652.53 2712.10 1654.27 C 2708.11 1654.02 2703.14 1655.02 2699.15 1657.51 Z" fill="#3a2824"/><circle cx="2705.97" cy="1656.41" r="3.53" fill="rgba(255,255,255,0.22)" stroke="#6a615f" stroke-width="0.50"/><circle cx="2716.28" cy="1655.71" r="3.43" fill="rgba(255,255,255,0.22)" stroke="#6a615f" stroke-width="0.50"/><path d="M 2701.15 1654.62 L 2709.36 1654.12 M 2712.84 1653.82 L 2721.55 1652.83 M 2709.41 1655.62 Q 2711.10 1654.92 2712.84 1655.32" stroke="#4a4443" stroke-width="0.65" fill="none" stroke-linecap="round"/><ellipse cx="2706.42" cy="1655.62" rx="1.44" ry="0.55" fill="#5c4a42"/><ellipse cx="2715.88" cy="1654.92" rx="1.44" ry="0.55" fill="#5c4a42"/><path d="M 2710.10 1659.80 Q 2711.60 1660.99 2713.29 1659.70" stroke="#bd7c66" stroke-width="0.80" fill="none" stroke-linecap="round"/><ellipse cx="2712.05" cy="1663.48" rx="3.68" ry="0.95" fill="#c7787f"/></g></svg>
<svg style="position:absolute;left:3210.7px;top:1639.5px;overflow:visible" width="38.6" height="38.6" viewBox="3210.7 1639.5 38.6 38.6" ><path d="M3221.33,1640.50 H3238.67 A9.63,9.63 0 0 1 3248.30,1650.13 V1667.47 A9.63,9.63 0 0 1 3238.67,1677.10 H3221.33 A9.63,9.63 0 0 1 3211.70,1667.47 V1650.13 A9.63,9.63 0 0 1 3221.33,1640.50 Z M3222.73,1644.35 H3237.27 A1.86,1.86 0 0 1 3237.27,1648.07 H3222.73 A1.86,1.86 0 0 1 3222.73,1644.35 Z M3216.75,1651.66 H3243.25 A1.33,1.33 0 0 1 3244.58,1652.99 V1667.20 A6.31,6.31 0 0 1 3238.27,1673.51 H3221.73 A6.31,6.31 0 0 1 3215.42,1667.20 V1652.99 A1.33,1.33 0 0 1 3216.75,1651.66 Z" fill="#3b444c" fill-rule="evenodd"/><circle cx="3220.80" cy="1658.83" r="1.96" fill="#3b444c"/><circle cx="3220.80" cy="1666.14" r="1.96" fill="#3b444c"/><circle cx="3230.00" cy="1658.83" r="1.96" fill="#3b444c"/><circle cx="3230.00" cy="1666.14" r="1.96" fill="#3b444c"/><circle cx="3239.20" cy="1658.83" r="1.96" fill="#3b444c"/><circle cx="3239.20" cy="1666.14" r="1.96" fill="#3b444c"/></svg>
<svg style="position:absolute;left:2172.7px;top:1727.5px;overflow:visible" width="38.6" height="38.6" viewBox="2172.7 1727.5 38.6 38.6" ><path d="M2183.33,1728.50 H2200.67 A9.63,9.63 0 0 1 2210.30,1738.13 V1755.47 A9.63,9.63 0 0 1 2200.67,1765.10 H2183.33 A9.63,9.63 0 0 1 2173.70,1755.47 V1738.13 A9.63,9.63 0 0 1 2183.33,1728.50 Z M2184.73,1732.35 H2199.27 A1.86,1.86 0 0 1 2199.27,1736.07 H2184.73 A1.86,1.86 0 0 1 2184.73,1732.35 Z M2178.75,1739.66 H2205.25 A1.33,1.33 0 0 1 2206.58,1740.99 V1755.20 A6.31,6.31 0 0 1 2200.27,1761.51 H2183.73 A6.31,6.31 0 0 1 2177.42,1755.20 V1740.99 A1.33,1.33 0 0 1 2178.75,1739.66 Z" fill="#3b444c" fill-rule="evenodd"/><circle cx="2182.80" cy="1746.83" r="1.96" fill="#3b444c"/><circle cx="2182.80" cy="1754.14" r="1.96" fill="#3b444c"/><circle cx="2192.00" cy="1746.83" r="1.96" fill="#3b444c"/><circle cx="2192.00" cy="1754.14" r="1.96" fill="#3b444c"/><circle cx="2201.20" cy="1746.83" r="1.96" fill="#3b444c"/><circle cx="2201.20" cy="1754.14" r="1.96" fill="#3b444c"/></svg>
<svg style="position:absolute;left:2690.1px;top:1725.8px;overflow:visible" width="42" height="42" viewBox="2690.1 1725.8 42 42" ><defs><clipPath id="pc1"><circle cx="2711.1" cy="1746.8" r="18.3"/></clipPath></defs><circle cx="2711.1" cy="1746.8" r="18.35" fill="none" stroke="#3b444c" stroke-width="3.3" stroke-linecap="round" stroke-linejoin="round"/><circle cx="2711.1" cy="1742.20" r="6.2" fill="#3b444c"/><ellipse cx="2711.1" cy="1770.30" rx="15.5" ry="18" fill="#3b444c" clip-path="url(#pc1)"/></svg>
<svg style="position:absolute;left:3210.7px;top:1727.5px;overflow:visible" width="38.6" height="38.6" viewBox="3210.7 1727.5 38.6 38.6" ><path d="M3221.33,1728.50 H3238.67 A9.63,9.63 0 0 1 3248.30,1738.13 V1755.47 A9.63,9.63 0 0 1 3238.67,1765.10 H3221.33 A9.63,9.63 0 0 1 3211.70,1755.47 V1738.13 A9.63,9.63 0 0 1 3221.33,1728.50 Z M3222.73,1732.35 H3237.27 A1.86,1.86 0 0 1 3237.27,1736.07 H3222.73 A1.86,1.86 0 0 1 3222.73,1732.35 Z M3216.75,1739.66 H3243.25 A1.33,1.33 0 0 1 3244.58,1740.99 V1755.20 A6.31,6.31 0 0 1 3238.27,1761.51 H3221.73 A6.31,6.31 0 0 1 3215.42,1755.20 V1740.99 A1.33,1.33 0 0 1 3216.75,1739.66 Z" fill="#3b444c" fill-rule="evenodd"/><circle cx="3220.80" cy="1746.83" r="1.96" fill="#3b444c"/><circle cx="3220.80" cy="1754.14" r="1.96" fill="#3b444c"/><circle cx="3230.00" cy="1746.83" r="1.96" fill="#3b444c"/><circle cx="3230.00" cy="1754.14" r="1.96" fill="#3b444c"/><circle cx="3239.20" cy="1746.83" r="1.96" fill="#3b444c"/><circle cx="3239.20" cy="1754.14" r="1.96" fill="#3b444c"/></svg>
<svg style="position:absolute;left:2172.7px;top:1815.5px;overflow:visible" width="38.6" height="38.6" viewBox="2172.7 1815.5 38.6 38.6" ><path d="M2183.33,1816.50 H2200.67 A9.63,9.63 0 0 1 2210.30,1826.13 V1843.47 A9.63,9.63 0 0 1 2200.67,1853.10 H2183.33 A9.63,9.63 0 0 1 2173.70,1843.47 V1826.13 A9.63,9.63 0 0 1 2183.33,1816.50 Z M2184.73,1820.35 H2199.27 A1.86,1.86 0 0 1 2199.27,1824.07 H2184.73 A1.86,1.86 0 0 1 2184.73,1820.35 Z M2178.75,1827.66 H2205.25 A1.33,1.33 0 0 1 2206.58,1828.99 V1843.20 A6.31,6.31 0 0 1 2200.27,1849.51 H2183.73 A6.31,6.31 0 0 1 2177.42,1843.20 V1828.99 A1.33,1.33 0 0 1 2178.75,1827.66 Z" fill="#3b444c" fill-rule="evenodd"/><circle cx="2182.80" cy="1834.83" r="1.96" fill="#3b444c"/><circle cx="2182.80" cy="1842.14" r="1.96" fill="#3b444c"/><circle cx="2192.00" cy="1834.83" r="1.96" fill="#3b444c"/><circle cx="2192.00" cy="1842.14" r="1.96" fill="#3b444c"/><circle cx="2201.20" cy="1834.83" r="1.96" fill="#3b444c"/><circle cx="2201.20" cy="1842.14" r="1.96" fill="#3b444c"/></svg>
<svg style="position:absolute;left:2690.1px;top:1813.8px;overflow:visible" width="42" height="42" viewBox="2690.1 1813.8 42 42" ><defs><clipPath id="pc2"><circle cx="2711.1" cy="1834.8" r="18.3"/></clipPath></defs><circle cx="2711.1" cy="1834.8" r="18.35" fill="none" stroke="#3b444c" stroke-width="3.3" stroke-linecap="round" stroke-linejoin="round"/><circle cx="2711.1" cy="1830.20" r="6.2" fill="#3b444c"/><ellipse cx="2711.1" cy="1858.30" rx="15.5" ry="18" fill="#3b444c" clip-path="url(#pc2)"/></svg>
<svg style="position:absolute;left:3210.7px;top:1815.5px;overflow:visible" width="38.6" height="38.6" viewBox="3210.7 1815.5 38.6 38.6" ><path d="M3221.33,1816.50 H3238.67 A9.63,9.63 0 0 1 3248.30,1826.13 V1843.47 A9.63,9.63 0 0 1 3238.67,1853.10 H3221.33 A9.63,9.63 0 0 1 3211.70,1843.47 V1826.13 A9.63,9.63 0 0 1 3221.33,1816.50 Z M3222.73,1820.35 H3237.27 A1.86,1.86 0 0 1 3237.27,1824.07 H3222.73 A1.86,1.86 0 0 1 3222.73,1820.35 Z M3216.75,1827.66 H3243.25 A1.33,1.33 0 0 1 3244.58,1828.99 V1843.20 A6.31,6.31 0 0 1 3238.27,1849.51 H3221.73 A6.31,6.31 0 0 1 3215.42,1843.20 V1828.99 A1.33,1.33 0 0 1 3216.75,1827.66 Z" fill="#3b444c" fill-rule="evenodd"/><circle cx="3220.80" cy="1834.83" r="1.96" fill="#3b444c"/><circle cx="3220.80" cy="1842.14" r="1.96" fill="#3b444c"/><circle cx="3230.00" cy="1834.83" r="1.96" fill="#3b444c"/><circle cx="3230.00" cy="1842.14" r="1.96" fill="#3b444c"/><circle cx="3239.20" cy="1834.83" r="1.96" fill="#3b444c"/><circle cx="3239.20" cy="1842.14" r="1.96" fill="#3b444c"/></svg>
<svg style="position:absolute;left:2172.7px;top:1903.5px;overflow:visible" width="38.6" height="38.6" viewBox="2172.7 1903.5 38.6 38.6" ><path d="M2183.33,1904.50 H2200.67 A9.63,9.63 0 0 1 2210.30,1914.13 V1931.47 A9.63,9.63 0 0 1 2200.67,1941.10 H2183.33 A9.63,9.63 0 0 1 2173.70,1931.47 V1914.13 A9.63,9.63 0 0 1 2183.33,1904.50 Z M2184.73,1908.35 H2199.27 A1.86,1.86 0 0 1 2199.27,1912.07 H2184.73 A1.86,1.86 0 0 1 2184.73,1908.35 Z M2178.75,1915.66 H2205.25 A1.33,1.33 0 0 1 2206.58,1916.99 V1931.20 A6.31,6.31 0 0 1 2200.27,1937.51 H2183.73 A6.31,6.31 0 0 1 2177.42,1931.20 V1916.99 A1.33,1.33 0 0 1 2178.75,1915.66 Z" fill="#3b444c" fill-rule="evenodd"/><circle cx="2182.80" cy="1922.83" r="1.96" fill="#3b444c"/><circle cx="2182.80" cy="1930.14" r="1.96" fill="#3b444c"/><circle cx="2192.00" cy="1922.83" r="1.96" fill="#3b444c"/><circle cx="2192.00" cy="1930.14" r="1.96" fill="#3b444c"/><circle cx="2201.20" cy="1922.83" r="1.96" fill="#3b444c"/><circle cx="2201.20" cy="1930.14" r="1.96" fill="#3b444c"/></svg>
<svg style="position:absolute;left:2690.1px;top:1901.8px;overflow:visible" width="42" height="42" viewBox="2690.1 1901.8 42 42" ><defs><clipPath id="pc3"><circle cx="2711.1" cy="1922.8" r="18.3"/></clipPath></defs><circle cx="2711.1" cy="1922.8" r="18.35" fill="none" stroke="#3b444c" stroke-width="3.3" stroke-linecap="round" stroke-linejoin="round"/><circle cx="2711.1" cy="1918.20" r="6.2" fill="#3b444c"/><ellipse cx="2711.1" cy="1946.30" rx="15.5" ry="18" fill="#3b444c" clip-path="url(#pc3)"/></svg>
<svg style="position:absolute;left:3210.7px;top:1903.5px;overflow:visible" width="38.6" height="38.6" viewBox="3210.7 1903.5 38.6 38.6" ><path d="M3221.33,1904.50 H3238.67 A9.63,9.63 0 0 1 3248.30,1914.13 V1931.47 A9.63,9.63 0 0 1 3238.67,1941.10 H3221.33 A9.63,9.63 0 0 1 3211.70,1931.47 V1914.13 A9.63,9.63 0 0 1 3221.33,1904.50 Z M3222.73,1908.35 H3237.27 A1.86,1.86 0 0 1 3237.27,1912.07 H3222.73 A1.86,1.86 0 0 1 3222.73,1908.35 Z M3216.75,1915.66 H3243.25 A1.33,1.33 0 0 1 3244.58,1916.99 V1931.20 A6.31,6.31 0 0 1 3238.27,1937.51 H3221.73 A6.31,6.31 0 0 1 3215.42,1931.20 V1916.99 A1.33,1.33 0 0 1 3216.75,1915.66 Z" fill="#3b444c" fill-rule="evenodd"/><circle cx="3220.80" cy="1922.83" r="1.96" fill="#3b444c"/><circle cx="3220.80" cy="1930.14" r="1.96" fill="#3b444c"/><circle cx="3230.00" cy="1922.83" r="1.96" fill="#3b444c"/><circle cx="3230.00" cy="1930.14" r="1.96" fill="#3b444c"/><circle cx="3239.20" cy="1922.83" r="1.96" fill="#3b444c"/><circle cx="3239.20" cy="1930.14" r="1.96" fill="#3b444c"/></svg>
<svg style="position:absolute;left:2172.7px;top:1991.5px;overflow:visible" width="38.6" height="38.6" viewBox="2172.7 1991.5 38.6 38.6" ><path d="M2183.33,1992.50 H2200.67 A9.63,9.63 0 0 1 2210.30,2002.13 V2019.47 A9.63,9.63 0 0 1 2200.67,2029.10 H2183.33 A9.63,9.63 0 0 1 2173.70,2019.47 V2002.13 A9.63,9.63 0 0 1 2183.33,1992.50 Z M2184.73,1996.35 H2199.27 A1.86,1.86 0 0 1 2199.27,2000.07 H2184.73 A1.86,1.86 0 0 1 2184.73,1996.35 Z M2178.75,2003.66 H2205.25 A1.33,1.33 0 0 1 2206.58,2004.99 V2019.20 A6.31,6.31 0 0 1 2200.27,2025.51 H2183.73 A6.31,6.31 0 0 1 2177.42,2019.20 V2004.99 A1.33,1.33 0 0 1 2178.75,2003.66 Z" fill="#3b444c" fill-rule="evenodd"/><circle cx="2182.80" cy="2010.83" r="1.96" fill="#3b444c"/><circle cx="2182.80" cy="2018.14" r="1.96" fill="#3b444c"/><circle cx="2192.00" cy="2010.83" r="1.96" fill="#3b444c"/><circle cx="2192.00" cy="2018.14" r="1.96" fill="#3b444c"/><circle cx="2201.20" cy="2010.83" r="1.96" fill="#3b444c"/><circle cx="2201.20" cy="2018.14" r="1.96" fill="#3b444c"/></svg>
<svg style="position:absolute;left:2690.1px;top:1989.8px;overflow:visible" width="42" height="42" viewBox="2690.1 1989.8 42 42" ><defs><clipPath id="pc4"><circle cx="2711.1" cy="2010.8" r="18.3"/></clipPath></defs><circle cx="2711.1" cy="2010.8" r="18.35" fill="none" stroke="#3b444c" stroke-width="3.3" stroke-linecap="round" stroke-linejoin="round"/><circle cx="2711.1" cy="2006.20" r="6.2" fill="#3b444c"/><ellipse cx="2711.1" cy="2034.30" rx="15.5" ry="18" fill="#3b444c" clip-path="url(#pc4)"/></svg>
<svg style="position:absolute;left:3210.7px;top:1991.5px;overflow:visible" width="38.6" height="38.6" viewBox="3210.7 1991.5 38.6 38.6" ><path d="M3221.33,1992.50 H3238.67 A9.63,9.63 0 0 1 3248.30,2002.13 V2019.47 A9.63,9.63 0 0 1 3238.67,2029.10 H3221.33 A9.63,9.63 0 0 1 3211.70,2019.47 V2002.13 A9.63,9.63 0 0 1 3221.33,1992.50 Z M3222.73,1996.35 H3237.27 A1.86,1.86 0 0 1 3237.27,2000.07 H3222.73 A1.86,1.86 0 0 1 3222.73,1996.35 Z M3216.75,2003.66 H3243.25 A1.33,1.33 0 0 1 3244.58,2004.99 V2019.20 A6.31,6.31 0 0 1 3238.27,2025.51 H3221.73 A6.31,6.31 0 0 1 3215.42,2019.20 V2004.99 A1.33,1.33 0 0 1 3216.75,2003.66 Z" fill="#3b444c" fill-rule="evenodd"/><circle cx="3220.80" cy="2010.83" r="1.96" fill="#3b444c"/><circle cx="3220.80" cy="2018.14" r="1.96" fill="#3b444c"/><circle cx="3230.00" cy="2010.83" r="1.96" fill="#3b444c"/><circle cx="3230.00" cy="2018.14" r="1.96" fill="#3b444c"/><circle cx="3239.20" cy="2010.83" r="1.96" fill="#3b444c"/><circle cx="3239.20" cy="2018.14" r="1.96" fill="#3b444c"/></svg>
<svg style="position:absolute;left:2172.7px;top:2079.5px;overflow:visible" width="38.6" height="38.6" viewBox="2172.7 2079.5 38.6 38.6" ><path d="M2183.33,2080.50 H2200.67 A9.63,9.63 0 0 1 2210.30,2090.13 V2107.47 A9.63,9.63 0 0 1 2200.67,2117.10 H2183.33 A9.63,9.63 0 0 1 2173.70,2107.47 V2090.13 A9.63,9.63 0 0 1 2183.33,2080.50 Z M2184.73,2084.35 H2199.27 A1.86,1.86 0 0 1 2199.27,2088.07 H2184.73 A1.86,1.86 0 0 1 2184.73,2084.35 Z M2178.75,2091.66 H2205.25 A1.33,1.33 0 0 1 2206.58,2092.99 V2107.20 A6.31,6.31 0 0 1 2200.27,2113.51 H2183.73 A6.31,6.31 0 0 1 2177.42,2107.20 V2092.99 A1.33,1.33 0 0 1 2178.75,2091.66 Z" fill="#3b444c" fill-rule="evenodd"/><circle cx="2182.80" cy="2098.83" r="1.96" fill="#3b444c"/><circle cx="2182.80" cy="2106.14" r="1.96" fill="#3b444c"/><circle cx="2192.00" cy="2098.83" r="1.96" fill="#3b444c"/><circle cx="2192.00" cy="2106.14" r="1.96" fill="#3b444c"/><circle cx="2201.20" cy="2098.83" r="1.96" fill="#3b444c"/><circle cx="2201.20" cy="2106.14" r="1.96" fill="#3b444c"/></svg>
<svg style="position:absolute;left:2690.1px;top:2077.8px;overflow:visible" width="42" height="42" viewBox="2690.1 2077.8 42 42" ><defs><clipPath id="pc5"><circle cx="2711.1" cy="2098.8" r="18.3"/></clipPath></defs><circle cx="2711.1" cy="2098.8" r="18.35" fill="none" stroke="#3b444c" stroke-width="3.3" stroke-linecap="round" stroke-linejoin="round"/><circle cx="2711.1" cy="2094.20" r="6.2" fill="#3b444c"/><ellipse cx="2711.1" cy="2122.30" rx="15.5" ry="18" fill="#3b444c" clip-path="url(#pc5)"/></svg>
<svg style="position:absolute;left:3210.7px;top:2079.5px;overflow:visible" width="38.6" height="38.6" viewBox="3210.7 2079.5 38.6 38.6" ><path d="M3221.33,2080.50 H3238.67 A9.63,9.63 0 0 1 3248.30,2090.13 V2107.47 A9.63,9.63 0 0 1 3238.67,2117.10 H3221.33 A9.63,9.63 0 0 1 3211.70,2107.47 V2090.13 A9.63,9.63 0 0 1 3221.33,2080.50 Z M3222.73,2084.35 H3237.27 A1.86,1.86 0 0 1 3237.27,2088.07 H3222.73 A1.86,1.86 0 0 1 3222.73,2084.35 Z M3216.75,2091.66 H3243.25 A1.33,1.33 0 0 1 3244.58,2092.99 V2107.20 A6.31,6.31 0 0 1 3238.27,2113.51 H3221.73 A6.31,6.31 0 0 1 3215.42,2107.20 V2092.99 A1.33,1.33 0 0 1 3216.75,2091.66 Z" fill="#3b444c" fill-rule="evenodd"/><circle cx="3220.80" cy="2098.83" r="1.96" fill="#3b444c"/><circle cx="3220.80" cy="2106.14" r="1.96" fill="#3b444c"/><circle cx="3230.00" cy="2098.83" r="1.96" fill="#3b444c"/><circle cx="3230.00" cy="2106.14" r="1.96" fill="#3b444c"/><circle cx="3239.20" cy="2098.83" r="1.96" fill="#3b444c"/><circle cx="3239.20" cy="2106.14" r="1.96" fill="#3b444c"/></svg>
<svg style="position:absolute;left:2172.7px;top:2167.5px;overflow:visible" width="38.6" height="38.6" viewBox="2172.7 2167.5 38.6 38.6" ><path d="M2183.33,2168.50 H2200.67 A9.63,9.63 0 0 1 2210.30,2178.13 V2195.47 A9.63,9.63 0 0 1 2200.67,2205.10 H2183.33 A9.63,9.63 0 0 1 2173.70,2195.47 V2178.13 A9.63,9.63 0 0 1 2183.33,2168.50 Z M2184.73,2172.35 H2199.27 A1.86,1.86 0 0 1 2199.27,2176.07 H2184.73 A1.86,1.86 0 0 1 2184.73,2172.35 Z M2178.75,2179.66 H2205.25 A1.33,1.33 0 0 1 2206.58,2180.99 V2195.20 A6.31,6.31 0 0 1 2200.27,2201.51 H2183.73 A6.31,6.31 0 0 1 2177.42,2195.20 V2180.99 A1.33,1.33 0 0 1 2178.75,2179.66 Z" fill="#3b444c" fill-rule="evenodd"/><circle cx="2182.80" cy="2186.83" r="1.96" fill="#3b444c"/><circle cx="2182.80" cy="2194.14" r="1.96" fill="#3b444c"/><circle cx="2192.00" cy="2186.83" r="1.96" fill="#3b444c"/><circle cx="2192.00" cy="2194.14" r="1.96" fill="#3b444c"/><circle cx="2201.20" cy="2186.83" r="1.96" fill="#3b444c"/><circle cx="2201.20" cy="2194.14" r="1.96" fill="#3b444c"/></svg>
<svg style="position:absolute;left:2690.1px;top:2165.8px;overflow:visible" width="42" height="42" viewBox="2690.1 2165.8 42 42" ><defs><clipPath id="pc6"><circle cx="2711.1" cy="2186.8" r="18.3"/></clipPath></defs><circle cx="2711.1" cy="2186.8" r="18.35" fill="none" stroke="#3b444c" stroke-width="3.3" stroke-linecap="round" stroke-linejoin="round"/><circle cx="2711.1" cy="2182.20" r="6.2" fill="#3b444c"/><ellipse cx="2711.1" cy="2210.30" rx="15.5" ry="18" fill="#3b444c" clip-path="url(#pc6)"/></svg>
<svg style="position:absolute;left:3210.7px;top:2167.5px;overflow:visible" width="38.6" height="38.6" viewBox="3210.7 2167.5 38.6 38.6" ><path d="M3221.33,2168.50 H3238.67 A9.63,9.63 0 0 1 3248.30,2178.13 V2195.47 A9.63,9.63 0 0 1 3238.67,2205.10 H3221.33 A9.63,9.63 0 0 1 3211.70,2195.47 V2178.13 A9.63,9.63 0 0 1 3221.33,2168.50 Z M3222.73,2172.35 H3237.27 A1.86,1.86 0 0 1 3237.27,2176.07 H3222.73 A1.86,1.86 0 0 1 3222.73,2172.35 Z M3216.75,2179.66 H3243.25 A1.33,1.33 0 0 1 3244.58,2180.99 V2195.20 A6.31,6.31 0 0 1 3238.27,2201.51 H3221.73 A6.31,6.31 0 0 1 3215.42,2195.20 V2180.99 A1.33,1.33 0 0 1 3216.75,2179.66 Z" fill="#3b444c" fill-rule="evenodd"/><circle cx="3220.80" cy="2186.83" r="1.96" fill="#3b444c"/><circle cx="3220.80" cy="2194.14" r="1.96" fill="#3b444c"/><circle cx="3230.00" cy="2186.83" r="1.96" fill="#3b444c"/><circle cx="3230.00" cy="2194.14" r="1.96" fill="#3b444c"/><circle cx="3239.20" cy="2186.83" r="1.96" fill="#3b444c"/><circle cx="3239.20" cy="2194.14" r="1.96" fill="#3b444c"/></svg>
<!-- text layer -->
<div id="txt">
<span class="t" style="left:48px;top:358px;font-size:31.4px;color:#8f9092;transform:translateX(0.87px) scaleX(1.0343);-webkit-text-stroke:0.6px #8f9092;">Start</span>
<span class="t" style="left:40px;top:533px;font-size:31.4px;color:#8f9092;transform:translateX(0.4px) scaleX(0.9767);-webkit-text-stroke:0.6px #8f9092;">Suche</span>
<span class="t" style="left:25px;top:777px;font-size:31.4px;color:#8f9092;transform:translateX(0.36px) scaleX(1.0068);-webkit-text-stroke:0.6px #8f9092;">Projekte</span>
<span class="t" style="left:16px;top:953px;font-size:31.4px;color:#8f9092;transform:translateX(0.98px) scaleX(1.0036);-webkit-text-stroke:0.6px #8f9092;">Aufgaben</span>
<span class="t" style="left:25px;top:1129px;font-size:31.4px;color:#ffffff;transform:translateX(0.36px) scaleX(1.0068);-webkit-text-stroke:0.6px #ffffff;">Berichte</span>
<span class="t" style="left:28px;top:1373px;font-size:31.4px;color:#8f9092;transform:translateX(0.34px) scaleX(1.0371);-webkit-text-stroke:0.6px #8f9092;">Notizen</span>
<span class="t" style="left:8px;top:1549px;font-size:31.4px;color:#8f9092;transform:translateX(0.23px) scaleX(0.9769);-webkit-text-stroke:0.6px #8f9092;">Mind Maps</span>
<span class="t" style="left:49px;top:2083px;font-size:33.87px;color:#fff3b0;transform:translateX(0.14px) scaleX(0.9289);">BBB</span>
<span class="t" style="left:246px;top:69px;font-size:58.72px;color:#ffffff;font-weight:700;transform:translateX(0.77px) scaleX(0.9577);">Berichte</span>
<span class="t" style="left:268px;top:248px;font-size:36.48px;color:#8a9299;font-weight:700;transform:translateX(0.76px) scaleX(0.9209);">SCHNELLE BERICHTE</span>
<span class="t" style="left:357px;top:364px;font-size:36.63px;color:#ffffff;transform:translateX(0.71px) scaleX(1.0149);-webkit-text-stroke:0.6px #ffffff;">Alle offenen Aufgaben</span>
<span class="t" style="left:355px;top:480px;font-size:36.63px;color:#ffffff;transform:translateX(0.05px) scaleX(1.0122);-webkit-text-stroke:0.6px #ffffff;">Kürzlich erstellte Aufgaben</span>
<span class="t" style="left:356px;top:595px;font-size:36.63px;color:#ffffff;font-weight:700;transform:translateX(0.62px) scaleX(0.9323);">Alle abgeschlossenen Aufgaben</span>
<span class="t" style="left:355px;top:710px;font-size:36.63px;color:#ffffff;transform:translateX(0.13px) scaleX(0.9913);-webkit-text-stroke:0.6px #ffffff;">Kürzlich abgeschlossene Aufgaben</span>
<span class="t" style="left:357px;top:826px;font-size:36.63px;color:#ffffff;transform:translateX(0.69px) scaleX(1.0044);-webkit-text-stroke:0.6px #ffffff;">Alle fälligen Aufgaben</span>
<span class="t" style="left:268px;top:982px;font-size:36.48px;color:#8a9299;font-weight:700;transform:translateX(0.62px) scaleX(0.9225);">ANPASSBARE BERICHTE</span>
<span class="t" style="left:356px;top:1098px;font-size:36.63px;color:#ffffff;transform:translateX(0.13px) scaleX(0.9821);-webkit-text-stroke:0.6px #ffffff;">2022 Q1+Q2</span>
<span class="t" style="left:354px;top:1214px;font-size:36.63px;color:#ffffff;transform:translateX(0.96px) scaleX(1.0207);-webkit-text-stroke:0.6px #ffffff;">Projektfortschritt: Alex 2022 H1</span>
<span class="t" style="left:1426px;top:47px;font-size:47.67px;color:#3b444c;font-weight:700;transform:translateX(0.36px) scaleX(0.9224);">Alle abgeschlossenen A...</span>
<span class="t" style="left:1136px;top:192px;font-size:34.88px;color:#3b444c;font-weight:700;transform:translateX(0.91px) scaleX(1.0152);">Projekt</span>
<span class="t" style="left:1138px;top:238px;font-size:40.55px;color:#3b444c;transform:translateX(0.65px) scaleX(1.0365);-webkit-text-stroke:0.25px #3b444c;">Alle Projekte</span>
<span class="t" style="left:1628px;top:192px;font-size:34.88px;color:#3b444c;font-weight:700;transform:translateX(0.93px) scaleX(1.0058);">Status</span>
<span class="t" style="left:1629px;top:238px;font-size:40.55px;color:#3b444c;transform:translateX(0.53px) scaleX(1.0257);-webkit-text-stroke:0.25px #3b444c;">Abgeschlossen</span>
<span class="t" style="left:2165px;top:192px;font-size:34.88px;color:#3b444c;font-weight:700;transform:translateX(0.99px) scaleX(0.968);">Abgeschlossen</span>
<span class="t" style="left:2166px;top:238px;font-size:40.55px;color:#3b444c;transform:translateX(0.83px) scaleX(1.042);-webkit-text-stroke:0.25px #3b444c;">Alle</span>
<span class="t" style="left:3124px;top:214px;font-size:42.73px;color:#c0c3c6;transform:translateX(0.55px) scaleX(0.9957);-webkit-text-stroke:0.25px #c0c3c6;">Zurücksetzen</span>
<span class="t" style="left:3535px;top:214px;font-size:42.73px;color:#f6f9fc;transform:translateX(0.87px) scaleX(0.9864);-webkit-text-stroke:0.25px #f6f9fc;">Speichern</span>
<span class="t" style="left:1126px;top:379px;font-size:47.38px;color:#3b444c;font-weight:700;transform:translateX(0.02px) scaleX(0.9617);">Gesamt</span>
<span class="t" style="left:1319px;top:379px;font-size:47.38px;color:#8b959b;transform:translateX(0.98px) scaleX(1.0136);-webkit-text-stroke:0.5px #8b959b;">189 Aufgaben</span>
<span class="t" style="left:2840px;top:359px;font-size:35.03px;color:#3b444c;font-weight:700;transform:translateX(0.23px) scaleX(0.9959);">x-Achse</span>
<span class="t" style="left:2840px;top:405px;font-size:41.13px;color:#3b444c;transform:translateX(0.79px) scaleX(1.0135);-webkit-text-stroke:0.25px #3b444c;">Abgeschlossen</span>
<span class="t" style="left:3343px;top:359px;font-size:35.03px;color:#3b444c;font-weight:700;transform:translateX(0.88px) scaleX(0.9847);">Gruppieren nach</span>
<span class="t" style="left:3345px;top:405px;font-size:41.13px;color:#3b444c;transform:translateX(0.11px) scaleX(1.0231);-webkit-text-stroke:0.25px #3b444c;">Aufgabeninhaber</span>
<span class="t" style="left:1131px;top:557px;font-size:29.51px;color:#8b9499;font-weight:700;transform:translateX(0.39px) scaleX(1.0933);-webkit-text-stroke:0.8px #8b9499;">140</span>
<span class="t" style="left:1131px;top:734px;font-size:29.51px;color:#8b9499;font-weight:700;transform:translateX(0.36px) scaleX(1.0511);-webkit-text-stroke:0.8px #8b9499;">105</span>
<span class="t" style="left:1132px;top:912px;font-size:29.51px;color:#8b9499;font-weight:700;transform:translateX(0.02px) scaleX(1.173);-webkit-text-stroke:0.8px #8b9499;">70</span>
<span class="t" style="left:1132px;top:1089px;font-size:29.51px;color:#8b9499;font-weight:700;transform:translateX(0.8px) scaleX(1.0682);-webkit-text-stroke:0.8px #8b9499;">35</span>
<span class="t" style="left:1132px;top:1267px;font-size:29.51px;color:#8b9499;font-weight:700;transform:translateX(0.06px) scaleX(1.3192);-webkit-text-stroke:0.8px #8b9499;">0</span>
<span class="t" style="left:1515px;top:509px;font-size:47.53px;color:#3b444c;font-weight:700;transform:translateX(0.24px) scaleX(1.0477);-webkit-text-stroke:1px #3b444c;">140</span>
<span class="t" style="left:1520px;top:1312px;font-size:31.1px;color:#8b9499;font-weight:700;transform:translateX(0.85px) scaleX(1.0853);-webkit-text-stroke:0.8px #8b9499;">2022</span>
<span class="t" style="left:2168px;top:1118px;font-size:47.53px;color:#3b444c;font-weight:700;transform:translateX(0.43px) scaleX(1.1401);-webkit-text-stroke:1px #3b444c;">20</span>
<span class="t" style="left:2162px;top:1312px;font-size:31.1px;color:#8b9499;font-weight:700;transform:translateX(0.49px) scaleX(1.0641);-webkit-text-stroke:0.8px #8b9499;">2023</span>
<span class="t" style="left:2814px;top:1123px;font-size:47.53px;color:#3b444c;font-weight:700;transform:translateX(0.19px) scaleX(0.9587);-webkit-text-stroke:1px #3b444c;">19</span>
<span class="t" style="left:2803px;top:1312px;font-size:31.1px;color:#8b9499;font-weight:700;transform:translateX(0.03px) scaleX(1.0691);-webkit-text-stroke:0.8px #8b9499;">2024</span>
<span class="t" style="left:3453px;top:1168px;font-size:47.53px;color:#3b444c;font-weight:700;transform:translateX(0.91px) scaleX(1.0175);-webkit-text-stroke:1px #3b444c;">10</span>
<span class="t" style="left:3445px;top:1312px;font-size:31.1px;color:#8b9499;font-weight:700;transform:translateX(0.64px) scaleX(1.0588);-webkit-text-stroke:0.8px #8b9499;">2025</span>
<span class="t" style="left:1198px;top:1430px;font-size:36.63px;color:#8b959b;transform:translateX(0.3px) scaleX(0.9635);-webkit-text-stroke:0.25px #8b959b;">Sophia</span>
<span class="t" style="left:1435px;top:1430px;font-size:36.63px;color:#8b959b;transform:translateX(0.26px) scaleX(0.9544);-webkit-text-stroke:0.25px #8b959b;">Ursula</span>
<span class="t" style="left:1663px;top:1430px;font-size:36.63px;color:#8b959b;transform:translateX(0.3px) scaleX(0.9967);-webkit-text-stroke:0.25px #8b959b;">Jan</span>
<span class="t" style="left:1848px;top:1430px;font-size:36.63px;color:#8b959b;transform:translateX(0.04px) scaleX(1.0084);-webkit-text-stroke:0.25px #8b959b;">Abigail</span>
<span class="t" style="left:2084px;top:1430px;font-size:36.63px;color:#8b959b;transform:translateX(0.17px) scaleX(0.9612);-webkit-text-stroke:0.25px #8b959b;">Yolanda</span>
<span class="t" style="left:2337px;top:1430px;font-size:36.63px;color:#8b959b;transform:translateX(0.28px) scaleX(0.972);-webkit-text-stroke:0.25px #8b959b;">Jamar</span>
<span class="t" style="left:2562px;top:1430px;font-size:36.63px;color:#8b959b;transform:translateX(0.77px) scaleX(1.0104);-webkit-text-stroke:0.25px #8b959b;">Andre</span>
<span class="t" style="left:2787px;top:1430px;font-size:36.63px;color:#8b959b;transform:translateX(0.06px) scaleX(0.9563);-webkit-text-stroke:0.25px #8b959b;">Anna</span>
<span class="t" style="left:2995px;top:1430px;font-size:36.63px;color:#8b959b;transform:translateX(0.74px) scaleX(0.9491);-webkit-text-stroke:0.25px #8b959b;">Clara</span>
<span class="t" style="left:3204px;top:1430px;font-size:36.63px;color:#8b959b;transform:translateX(0.46px) scaleX(1.0192);-webkit-text-stroke:0.25px #8b959b;">Nicht zugewiesen</span>
<span class="t" style="left:1132px;top:1561px;font-size:30.52px;color:#8b959b;font-weight:700;transform:translateX(0.36px) scaleX(0.9291);">PROJEKT</span>
<span class="t" style="left:1650px;top:1561px;font-size:30.52px;color:#8b959b;font-weight:700;transform:translateX(0.24px) scaleX(0.9953);">NAME</span>
<span class="t" style="left:2169px;top:1561px;font-size:30.52px;color:#8b959b;font-weight:700;transform:translateX(0.38px) scaleX(0.9263);">ERSTELLT AM</span>
<span class="t" style="left:2687px;top:1561px;font-size:30.52px;color:#8b959b;font-weight:700;transform:translateX(0.96px) scaleX(0.9767);">ZUGEWIESEN AN</span>
<span class="t" style="left:3206px;top:1561px;font-size:30.52px;color:#8b959b;font-weight:700;transform:translateX(0.51px) scaleX(0.9558);">ABGESCHLOSSEN AM</span>
<span class="t" style="left:1132px;top:1644px;font-size:36.63px;color:#3b444c;transform:translateX(0.6px) scaleX(1.031);-webkit-text-stroke:0.25px #3b444c;">Software-Sprint</span>
<span class="t" style="left:1650px;top:1644px;font-size:36.63px;color:#3b444c;transform:translateX(0.7px) scaleX(1.0103);-webkit-text-stroke:0.25px #3b444c;">Github-Integration: Fehler</span>
<span class="t" style="left:2245px;top:1644px;font-size:36.63px;color:#3b444c;transform:translateX(0.68px) scaleX(0.9319);-webkit-text-stroke:0.25px #3b444c;">11. Feb. 2022</span>
<span class="t" style="left:2765px;top:1644px;font-size:36.63px;color:#3b444c;transform:translateX(0.7px) scaleX(0.9447);-webkit-text-stroke:0.25px #3b444c;">Ursula</span>
<span class="t" style="left:3283px;top:1644px;font-size:36.63px;color:#3b444c;transform:translateX(0.59px) scaleX(0.9657);-webkit-text-stroke:0.25px #3b444c;">14. März 2022</span>
<span class="t" style="left:1132px;top:1732px;font-size:36.63px;color:#3b444c;transform:translateX(0.6px) scaleX(1.031);-webkit-text-stroke:0.25px #3b444c;">Software-Sprint</span>
<span class="t" style="left:1652px;top:1732px;font-size:36.63px;color:#3b444c;transform:translateX(0.28px) scaleX(0.9899);-webkit-text-stroke:0.25px #3b444c;">Viewer für Dateianhänge</span>
<span class="t" style="left:2245px;top:1732px;font-size:36.63px;color:#3b444c;transform:translateX(0.68px) scaleX(0.9319);-webkit-text-stroke:0.25px #3b444c;">11. Feb. 2022</span>
<span class="t" style="left:2765px;top:1732px;font-size:36.63px;color:#3b444c;transform:translateX(0.8px) scaleX(1.0095);-webkit-text-stroke:0.25px #3b444c;">Nicht zugewiesen</span>
<span class="t" style="left:3283px;top:1732px;font-size:36.63px;color:#3b444c;transform:translateX(0.68px) scaleX(0.9319);-webkit-text-stroke:0.25px #3b444c;">11. Feb. 2022</span>
<span class="t" style="left:1132px;top:1820px;font-size:36.63px;color:#3b444c;transform:translateX(0.6px) scaleX(1.031);-webkit-text-stroke:0.25px #3b444c;">Software-Sprint</span>
<span class="t" style="left:1649px;top:1820px;font-size:36.63px;color:#3b444c;transform:translateX(0.69px) scaleX(0.9956);-webkit-text-stroke:0.25px #3b444c;">Benutzerdefinierte Scroll...</span>
<span class="t" style="left:2245px;top:1820px;font-size:36.63px;color:#3b444c;transform:translateX(0.68px) scaleX(0.9319);-webkit-text-stroke:0.25px #3b444c;">11. Feb. 2022</span>
<span class="t" style="left:2765px;top:1820px;font-size:36.63px;color:#3b444c;transform:translateX(0.8px) scaleX(1.0095);-webkit-text-stroke:0.25px #3b444c;">Nicht zugewiesen</span>
<span class="t" style="left:3283px;top:1820px;font-size:36.63px;color:#3b444c;transform:translateX(0.68px) scaleX(0.9319);-webkit-text-stroke:0.25px #3b444c;">11. Feb. 2022</span>
<span class="t" style="left:1132px;top:1908px;font-size:36.63px;color:#3b444c;transform:translateX(0.6px) scaleX(1.031);-webkit-text-stroke:0.25px #3b444c;">Software-Sprint</span>
<span class="t" style="left:1651px;top:1908px;font-size:36.63px;color:#3b444c;transform:translateX(0.9px) scaleX(0.976);-webkit-text-stroke:0.25px #3b444c;">Task-Beziehungen</span>
<span class="t" style="left:2245px;top:1908px;font-size:36.63px;color:#3b444c;transform:translateX(0.68px) scaleX(0.9319);-webkit-text-stroke:0.25px #3b444c;">11. Feb. 2022</span>
<span class="t" style="left:2765px;top:1908px;font-size:36.63px;color:#3b444c;transform:translateX(0.8px) scaleX(1.0095);-webkit-text-stroke:0.25px #3b444c;">Nicht zugewiesen</span>
<span class="t" style="left:3283px;top:1908px;font-size:36.63px;color:#3b444c;transform:translateX(0.68px) scaleX(0.9319);-webkit-text-stroke:0.25px #3b444c;">11. Feb. 2022</span>
<span class="t" style="left:1132px;top:1996px;font-size:36.63px;color:#3b444c;transform:translateX(0.6px) scaleX(1.031);-webkit-text-stroke:0.25px #3b444c;">Software-Sprint</span>
<span class="t" style="left:1651px;top:1996px;font-size:36.63px;color:#3b444c;transform:translateX(0.92px) scaleX(0.9698);-webkit-text-stroke:0.25px #3b444c;">Tasks verschieben</span>
<span class="t" style="left:2245px;top:1996px;font-size:36.63px;color:#3b444c;transform:translateX(0.68px) scaleX(0.9319);-webkit-text-stroke:0.25px #3b444c;">11. Feb. 2022</span>
<span class="t" style="left:2765px;top:1996px;font-size:36.63px;color:#3b444c;transform:translateX(0.8px) scaleX(1.0095);-webkit-text-stroke:0.25px #3b444c;">Nicht zugewiesen</span>
<span class="t" style="left:3283px;top:1996px;font-size:36.63px;color:#3b444c;transform:translateX(0.68px) scaleX(0.9319);-webkit-text-stroke:0.25px #3b444c;">11. Feb. 2022</span>
<span class="t" style="left:1132px;top:2084px;font-size:36.63px;color:#3b444c;transform:translateX(0.6px) scaleX(1.031);-webkit-text-stroke:0.25px #3b444c;">Software-Sprint</span>
<span class="t" style="left:1649px;top:2084px;font-size:36.63px;color:#3b444c;transform:translateX(0.64px) scaleX(1.0219);-webkit-text-stroke:0.25px #3b444c;">Neue Print-Optionen</span>
<span class="t" style="left:2245px;top:2084px;font-size:36.63px;color:#3b444c;transform:translateX(0.68px) scaleX(0.9319);-webkit-text-stroke:0.25px #3b444c;">11. Feb. 2022</span>
<span class="t" style="left:2765px;top:2084px;font-size:36.63px;color:#3b444c;transform:translateX(0.8px) scaleX(1.0095);-webkit-text-stroke:0.25px #3b444c;">Nicht zugewiesen</span>
<span class="t" style="left:3283px;top:2084px;font-size:36.63px;color:#3b444c;transform:translateX(0.68px) scaleX(0.9319);-webkit-text-stroke:0.25px #3b444c;">11. Feb. 2022</span>
<span class="t" style="left:1133px;top:2172px;font-size:36.63px;color:#3b444c;transform:translateX(0.37px) scaleX(1.0277);-webkit-text-stroke:0.25px #3b444c;">Software-Sprint</span>
<span class="t" style="left:1652px;top:2172px;font-size:36.63px;color:#3b444c;transform:translateX(0.5px) scaleX(0.9406);-webkit-text-stroke:0.25px #3b444c;">Änderungen nachverfolgen</span>
<span class="t" style="left:2246px;top:2172px;font-size:36.63px;color:#3b444c;transform:translateX(0.44px) scaleX(0.9275);-webkit-text-stroke:0.25px #3b444c;">11. Feb. 2022</span>
<span class="t" style="left:2765px;top:2172px;font-size:36.63px;color:#3b444c;transform:translateX(0.77px) scaleX(1.0097);-webkit-text-stroke:0.25px #3b444c;">Nicht zugewiesen</span>
<span class="t" style="left:3284px;top:2172px;font-size:36.63px;color:#3b444c;transform:translateX(0.38px) scaleX(0.9603);-webkit-text-stroke:0.25px #3b444c;">14. März 2022</span>
</div>
</body>
</html>
